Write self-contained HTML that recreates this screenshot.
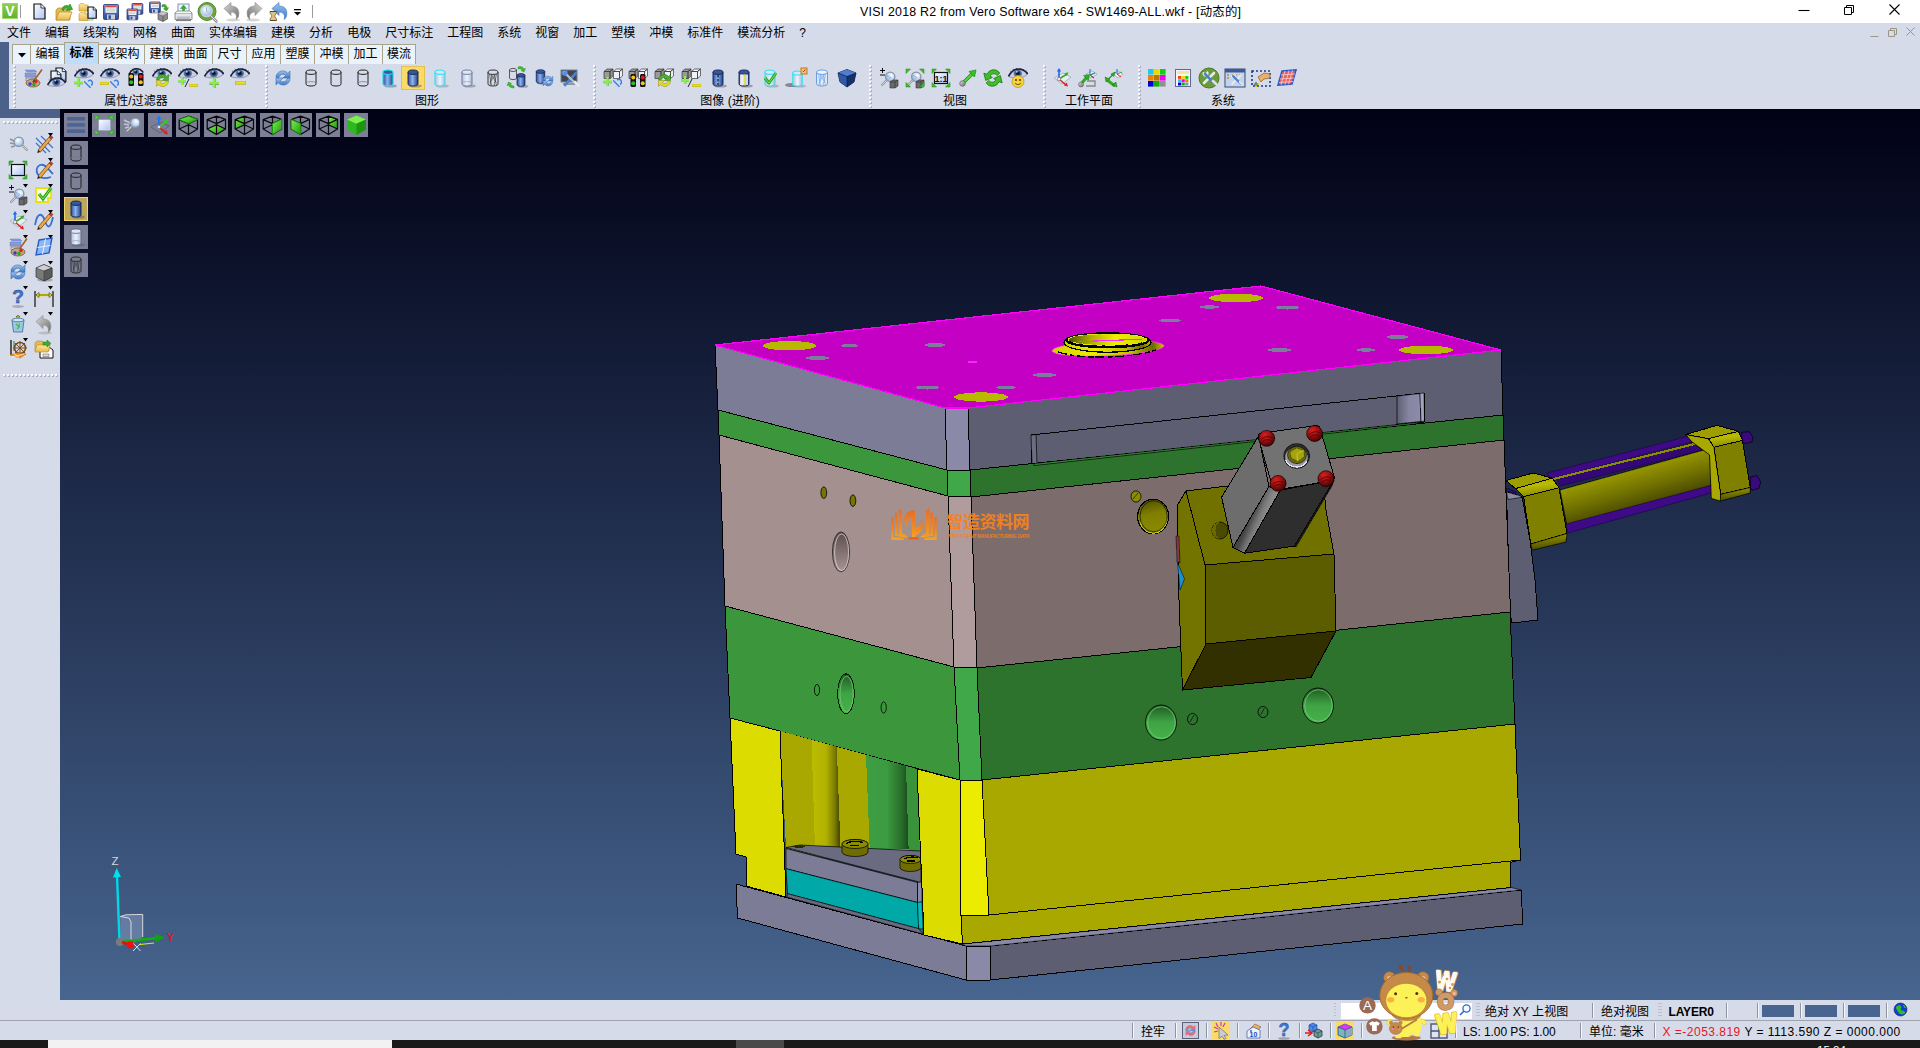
<!DOCTYPE html>
<html lang="zh-CN">
<head>
<meta charset="utf-8">
<title>VISI 2018 R2 from Vero Software x64 - SW1469-ALL.wkf - [动态的]</title>
<style>
*{box-sizing:border-box;margin:0;padding:0}
html,body{width:1920px;height:1048px;overflow:hidden;background:#d6dbe9}
body{position:relative;font-family:"Liberation Sans","Noto Sans CJK SC",sans-serif;font-size:12px;color:#000}
.abs{position:absolute}
#title{left:0;top:0;width:1920px;height:23px;background:#fff}
#titletxt{left:860px;top:3px;width:390px;height:17px;line-height:18px;font-size:12.4px;white-space:nowrap;color:#000;letter-spacing:0.213px}
#menubar{left:0;top:23px;width:1920px;height:20px;background:#d6dbe9;display:flex;padding-left:0}
#menubar span{display:block;padding:0 7px;line-height:20px;height:20px;font-size:12px;white-space:nowrap}
#bluestrip1{left:0;top:42px;width:9px;height:76px;background:#4c6189}
#bluestrip2{left:0;top:109px;width:60px;height:9px;background:#4c6189}
#tabs{left:12px;top:44px;height:20px;display:flex}
.tab{height:20px;border:1px solid #a9a58c;border-bottom:none;border-right:none;background:#eaf2fb;font-size:12px;line-height:19px;text-align:center;white-space:nowrap}
.tab.last{border-right:1px solid #a9a58c}
.tab.act{background:#c1dcf8;height:22px;margin-top:-2px;line-height:21px;border-right:1px solid #a9a58c;font-weight:700;width:35px !important;margin-right:-1px;position:relative;z-index:2}
#toolbar{left:9px;top:64px;width:1911px;height:45px;background:#d6dbe9}
.grip{position:absolute;width:3px;background-image:repeating-linear-gradient(to bottom,#f7f9fd 0,#f7f9fd 2px,rgba(0,0,0,0) 2px,rgba(0,0,0,0) 4px),repeating-linear-gradient(to bottom,#a9afc0 0,#a9afc0 2px,rgba(0,0,0,0) 2px,rgba(0,0,0,0) 4px);background-size:2px 100%,2px 100%;background-position:0 0,1px 1px;background-repeat:no-repeat}
.gl{position:absolute;top:94px;height:14px;line-height:14px;font-size:12px;white-space:nowrap;transform:translateX(-50%)}
.ic{position:absolute;overflow:visible}
#viewport{left:60px;top:109px;width:1860px;height:891px;background:linear-gradient(to bottom,#010114 0%,#0d132c 18%,#263657 55%,#47658f 100%);overflow:hidden}
.vb{position:absolute;width:24px;height:24px;background:#7d7f96}
.vb.on{background:#bda75c;border:1px solid #f3d46b}
#leftpanel{left:0;top:118px;width:60px;height:882px;background:#d6dbe9}
.hgrip{position:absolute;height:3px;background-image:repeating-linear-gradient(to right,#f7f9fd 0,#f7f9fd 2px,rgba(0,0,0,0) 2px,rgba(0,0,0,0) 4px),repeating-linear-gradient(to right,#a9afc0 0,#a9afc0 2px,rgba(0,0,0,0) 2px,rgba(0,0,0,0) 4px);background-size:100% 2px,100% 2px;background-position:0 0,1px 1px;background-repeat:no-repeat}
#status1{left:0;top:1000px;width:1920px;height:20px;background:#d6dbe9}
#status2{left:0;top:1020px;width:1920px;height:20px;background:#d6dbe9;border-top:1px solid #9fa3ad}
.st{position:absolute;white-space:nowrap;font-size:12px;line-height:16px;height:16px}
.sep{position:absolute;width:1px;height:15px;background:#8f949f;box-shadow:1px 0 0 #f6f8fc}
#taskbar{left:0;top:1040px;width:1920px;height:8px;background:#1a1a1a}
</style>
</head>
<body>
<svg width="0" height="0" style="position:absolute">
<defs>
<linearGradient id="gBlueCyl" x1="0" x2="1" y1="0" y2="0"><stop offset="0" stop-color="#2b4f9e"/><stop offset=".45" stop-color="#8db4ee"/><stop offset="1" stop-color="#1f3f86"/></linearGradient>
<linearGradient id="gGlass" x1="0" x2="1" y1="0" y2="0"><stop offset="0" stop-color="#aebfe0"/><stop offset=".5" stop-color="#eef3fc"/><stop offset="1" stop-color="#a9b9dc"/></linearGradient>
<linearGradient id="gDoc" x1="0" x2="1" y1="0" y2="1"><stop offset="0" stop-color="#ffffff"/><stop offset="1" stop-color="#a9c4f2"/></linearGradient>
<linearGradient id="gFolder" x1="0" x2="0" y1="0" y2="1"><stop offset="0" stop-color="#fbe9a0"/><stop offset="1" stop-color="#e9b84a"/></linearGradient>
<linearGradient id="gFloppy" x1="0" x2="0" y1="0" y2="1"><stop offset="0" stop-color="#6d8fd0"/><stop offset="1" stop-color="#2c4a94"/></linearGradient>
<linearGradient id="gGreenFace" x1="0" x2="1" y1="0" y2="1"><stop offset="0" stop-color="#7ff04a"/><stop offset="1" stop-color="#1e9a12"/></linearGradient>
<linearGradient id="gGray" x1="0" x2="1" y1="0" y2="1"><stop offset="0" stop-color="#d8d8d8"/><stop offset="1" stop-color="#6e6e6e"/></linearGradient>
<radialGradient id="gLens" cx=".4" cy=".35" r=".7"><stop offset="0" stop-color="#ffffff"/><stop offset="1" stop-color="#8fb5e6"/></radialGradient>
<radialGradient id="gIris" cx=".5" cy=".5" r=".5"><stop offset="0" stop-color="#14203a"/><stop offset=".55" stop-color="#3c5684"/><stop offset="1" stop-color="#6f8fc0"/></radialGradient>
<linearGradient id="gBlueArrow" x1="0" x2="0" y1="0" y2="1"><stop offset="0" stop-color="#9cc3ee"/><stop offset="1" stop-color="#3f78c4"/></linearGradient>

<symbol id="cylW" viewBox="0 0 20 20"><path d="M5 4.2v11.6a5 2.2 0 0 0 10 0V4.2" fill="none" stroke="#222" stroke-width="1"/><ellipse cx="10" cy="4.2" rx="5" ry="2.2" fill="none" stroke="#222" stroke-width="1"/><path d="M5 15.8a5 2.2 0 0 1 10 0" fill="none" stroke="#777" stroke-width=".7"/></symbol>
<symbol id="cylW2" viewBox="0 0 20 20"><path d="M5 4.2v11.6a5 2.2 0 0 0 10 0V4.2" fill="none" stroke="#222" stroke-width="1"/><ellipse cx="10" cy="4.2" rx="5" ry="2.2" fill="none" stroke="#222" stroke-width="1"/></symbol>
<symbol id="cylB" viewBox="0 0 20 20"><ellipse cx="12.5" cy="18" rx="6.5" ry="1.6" fill="#556" opacity=".45"/><path d="M5 4.2v11.6a5 2.2 0 0 0 10 0V4.2z" fill="url(#gBlueCyl)" stroke="#14224a" stroke-width=".9"/><ellipse cx="10" cy="4.2" rx="5" ry="2.2" fill="#35579f" stroke="#14224a" stroke-width=".9"/></symbol>
<symbol id="cylBC" viewBox="0 0 20 20"><ellipse cx="12.5" cy="18" rx="6.5" ry="1.6" fill="#556" opacity=".45"/><path d="M5 4.2v11.6a5 2.2 0 0 0 10 0V4.2z" fill="url(#gBlueCyl)" stroke="#19e0f0" stroke-width="1.1"/><ellipse cx="10" cy="4.2" rx="5" ry="2.2" fill="#35579f" stroke="#19e0f0" stroke-width="1.1"/></symbol>
<symbol id="cylG" viewBox="0 0 20 20"><ellipse cx="12.5" cy="18" rx="6.5" ry="1.6" fill="#556" opacity=".4"/><path d="M5 4.2v11.6a5 2.2 0 0 0 10 0V4.2z" fill="url(#gGlass)" stroke="#5a6684" stroke-width=".8"/><ellipse cx="10" cy="4.2" rx="5" ry="2.2" fill="#dde6f6" stroke="#5a6684" stroke-width=".8"/><path d="M5 15.8a5 2.2 0 0 1 10 0" fill="none" stroke="#8892ad" stroke-width=".6"/></symbol>
<symbol id="cylGC" viewBox="0 0 20 20"><ellipse cx="12.5" cy="18" rx="6.5" ry="1.6" fill="#556" opacity=".3"/><path d="M5 4.2v11.6a5 2.2 0 0 0 10 0V4.2z" fill="url(#gGlass)" stroke="#2fe3f0" stroke-width="1.1"/><ellipse cx="10" cy="4.2" rx="5" ry="2.2" fill="#dde6f6" stroke="#2fe3f0" stroke-width="1.1"/></symbol>
<symbol id="cylM" viewBox="0 0 20 20"><path d="M5 4.2v11.6a5 2.2 0 0 0 10 0V4.2" fill="none" stroke="#222" stroke-width=".9"/><ellipse cx="10" cy="4.2" rx="5" ry="2.2" fill="none" stroke="#222" stroke-width=".9"/><path d="M6.5 6l2 11.5M9 6.4l-2 11M11 6.4l2.5 11M13.5 6l-2.5 11.6M8 6.3l5 8M12.4 6.3l-5.4 8" fill="none" stroke="#333" stroke-width=".6"/></symbol>
<symbol id="eye" viewBox="0 0 20 12"><path d="M.6 8.600C3.500 3.400 7.500 1.400 10.500 1.500c3.800.1 7 2.300 9 4.800-2.600 2.200-5.400 3.400-9 3.600C6.500 10 3 9.600.6 8.600z" fill="#c6cfec" stroke="#6a5a6e" stroke-width=".5"/><ellipse cx="9.800" cy="5.400" rx="4.300" ry="4.100" fill="url(#gIris)"/><circle cx="9.800" cy="5.300" r="1.700" fill="#0c1424"/><circle cx="8.800" cy="3.800" r="1" fill="#a8c6ff"/><path d="M.6 8.300C3.500 2.800 7.500 1 10.500 1c3.800 0 7.200 2.200 9.100 5" fill="none" stroke="#1c2234" stroke-width="1.700"/><path d="M3.500 4.200l-1.200-1.600M5.800 2.600l-.8-1.800M8.800 1.500L8.500 0M12 1.400l.5-1.400M15 2.400l1-1.400M17.300 3.800l1.300-1M18.800 5.400l1.200-.6" stroke="#1c2234" stroke-width=".7"/></symbol>
<symbol id="refB" viewBox="0 0 20 20"><path d="M3 9.500C3 5 7 2.500 10.500 3c2 .3 3.300 1.200 4.300 2.300L17 3v7h-7l2.600-2.600C11.800 6.600 11 6.200 10 6.200 7.600 6.200 6 8 6 9.500z" fill="url(#gBlueArrow)" stroke="#3a6eb6" stroke-width=".6"/><path d="M17 10.500c0 4.500-4 7-7.500 6.500-2-.3-3.300-1.200-4.300-2.300L3 17v-7h7l-2.600 2.600c.8.800 1.600 1.200 2.600 1.200 2.400 0 4-1.800 4-3.300z" fill="url(#gBlueArrow)" stroke="#3a6eb6" stroke-width=".6"/></symbol>
<symbol id="refG" viewBox="0 0 20 20"><path d="M3 9.500C3 5 7 2.500 10.500 3c2 .3 3.300 1.200 4.300 2.300L17 3v7h-7l2.600-2.600C11.800 6.600 11 6.200 10 6.200 7.600 6.200 6 8 6 9.500z" fill="#49b32c" stroke="#1f7a10" stroke-width=".6"/><path d="M17 10.500c0 4.500-4 7-7.500 6.500-2-.3-3.300-1.200-4.300-2.300L3 17v-7h7l-2.600 2.600c.8.800 1.600 1.200 2.600 1.200 2.400 0 4-1.800 4-3.300z" fill="#e6dc20" stroke="#8f8a10" stroke-width=".6"/></symbol>
<symbol id="plusG" viewBox="0 0 8 8"><path d="M3.400 .6h2v3h3v2h-3v3h-2v-3h-3v-2h3z" fill="#3a4a2a" opacity=".55"/><path d="M3 0h2v3h3v2H5v3H3V5H0V3h3z" fill="#86f048"/></symbol>
<symbol id="minusY" viewBox="0 0 8 3"><rect x="0" y="0" width="8" height="2.400" fill="#ecdf10" stroke="#a89e08" stroke-width=".4"/></symbol>
<symbol id="undoS" viewBox="0 0 8 8"><path d="M.5 2.500l5 5M4 1.600c2.400-1.600 4.600 1.600 2.800 3.800" fill="none" stroke="#3a80e8" stroke-width="1.300" stroke-linecap="round"/></symbol>
<symbol id="traffic" viewBox="0 0 20 20"><rect x="2.500" y="5" width="5.500" height="13" rx="1.500" fill="#111"/><rect x="12" y="5" width="5.500" height="13" rx="1.500" fill="#111"/><circle cx="5.250" cy="8.500" r="2" fill="#f2c511"/><circle cx="5.250" cy="14.300" r="2" fill="#22c322"/><circle cx="14.750" cy="8.500" r="2" fill="#e81818"/><circle cx="14.750" cy="14.300" r="2" fill="#f2c511"/></symbol>
<symbol id="cubes" viewBox="0 0 20 12"><path d="M1 3.500l3-2.500h6l-3 2.500zM1 3.500h6v7H1zM7 3.500l3-2.500v7l-3 2.500z" fill="#9a9a9a" stroke="#3a3a3a" stroke-width=".7"/><path d="M10.500 3.500l3-2.500h6l-3 2.500zM10.500 3.500h6v7h-6zM16.500 3.500l3-2.500v7l-3 2.500z" fill="#eef1f6" stroke="#3a3a3a" stroke-width=".7"/></symbol>
<symbol id="vcube" viewBox="0 0 24 24"><path d="M12 3.500L20.500 7v10L12 21.500 3.500 17V7zM3.500 7L12 11l8.500-4M12 11v10.500M12 3.500v10M3.500 17l8.500-3.500 8.500 3.500" fill="none" stroke="#0c0c0c" stroke-width="1.200" stroke-linejoin="round"/></symbol>
<symbol id="mag" viewBox="0 0 20 20"><path d="M11.500 11.500l6 6" stroke="#9a9a9a" stroke-width="2.600" stroke-linecap="round"/><path d="M11.500 11.500l6 6" stroke="#dcdcdc" stroke-width="1" stroke-linecap="round"/><circle cx="8" cy="8" r="5.500" fill="url(#gLens)" stroke="#8a93a6" stroke-width="1.500"/></symbol>
<symbol id="tri" viewBox="0 0 6 4"><path d="M0 0h6L3 4z" fill="#000"/></symbol>
</defs>
</svg>
<div id="title" class="abs"></div>
<div id="titletxt" class="abs">VISI 2018 R2 from Vero Software x64 - SW1469-ALL.wkf - [动态的]</div>
<div class="abs" style="left:2px;top:3px;width:16px;height:16px;background:linear-gradient(#8ad04e,#5fb32e);border:1px solid #9fd86a;color:#fff;font-weight:bold;font-size:14px;line-height:14px;text-align:center">V</div>
<div class="abs" style="left:20px;top:5px;width:1px;height:13px;background:#9a9a9a"></div>
<svg class="ic" style="left:31px;top:3px" width="18" height="18" viewBox="0 0 18 18"><path d="M3 1h7.0l4.0 4.0v11.0h-11.0z" fill="url(#gDoc)" stroke="#111" stroke-width="1.2"/><path d="M10.0 1v4.0h4.0" fill="#fff" stroke="#111" stroke-width=".8"/></svg>
<svg class="ic" style="left:54px;top:2px" width="20" height="20" viewBox="0 0 20 20"><path d="M2 8l2-2h5l1.500 1.500H16V18H2z" fill="#e8b94d" stroke="#b8862a" stroke-width=".7"/><path d="M2 18l3-8h13l-3 8z" fill="url(#gFolder)" stroke="#b8862a" stroke-width=".7"/><path d="M8 8C8 4 12 2.500 15 4l1-2 2.500 5.500-6 1 1.200-2C11.500 5.600 9.500 6.500 9.800 8.500z" fill="#3fae2a" stroke="#1c7a10" stroke-width=".6"/></svg>
<svg class="ic" style="left:77px;top:2px" width="21" height="20" viewBox="0 0 21 20"><rect x="8" y="6" width="8" height="12" fill="#eafbe4" stroke="#6ac85a" stroke-width=".8"/><path d="M2 3l1.500-1.500h3L8 3h3v6H2z" fill="url(#gFolder)" stroke="#c8962e" stroke-width=".6"/><path d="M2 12l1.500-1.500h3L8 12h3v6.500H2z" fill="url(#gFolder)" stroke="#c8962e" stroke-width=".6"/><path d="M11 5h5.25l3.0 3.0v8.25h-8.25z" fill="url(#gDoc)" stroke="#111" stroke-width="1.2"/><path d="M16.25 5v3.0h3.0" fill="#fff" stroke="#111" stroke-width=".8"/></svg>
<svg class="ic" style="left:102px;top:3px" width="18" height="18" viewBox="0 0 18 18"><rect x="1.5" y="1.5" width="15.0" height="15.0" rx="1" fill="url(#gFloppy)" stroke="#22346e" stroke-width=".8"/><rect x="3.5" y="2.3" width="11.0" height="7.5" fill="#f4f4f4"/><rect x="3.5" y="2.3" width="11.0" height="2.0" fill="#e0443a"/><path d="M4.5 6.0h9.0M4.5 7.8h9.0" stroke="#9aa" stroke-width="0.6"/><rect x="5.0" y="11.5" width="8.0" height="5.0" fill="#c9ced8"/><rect x="6.5" y="12.3" width="2.4" height="3.6" fill="#2c4a94"/></svg>
<svg class="ic" style="left:126px;top:3px" width="19" height="18" viewBox="0 0 19 18"><rect x="6" y="0.5" width="10.799999999999999" height="10.799999999999999" rx="1" fill="url(#gFloppy)" stroke="#22346e" stroke-width=".8"/><rect x="7.4399999999999995" y="1.076" width="7.92" height="5.3999999999999995" fill="#f4f4f4"/><rect x="7.4399999999999995" y="1.076" width="7.92" height="1.44" fill="#e0443a"/><path d="M8.16 3.7399999999999998h6.4799999999999995M8.16 5.036h6.4799999999999995" stroke="#9aa" stroke-width="0.432"/><rect x="8.52" y="7.699999999999999" width="5.76" height="3.5999999999999996" fill="#c9ced8"/><rect x="9.6" y="8.276" width="1.728" height="2.592" fill="#2c4a94"/><rect x="1" y="6" width="10.799999999999999" height="10.799999999999999" rx="1" fill="url(#gFloppy)" stroke="#22346e" stroke-width=".8"/><rect x="2.44" y="6.576" width="7.92" height="5.3999999999999995" fill="#f4f4f4"/><rect x="2.44" y="6.576" width="7.92" height="1.44" fill="#e0443a"/><path d="M3.16 9.24h6.4799999999999995M3.16 10.536h6.4799999999999995" stroke="#9aa" stroke-width="0.432"/><rect x="3.52" y="13.2" width="5.76" height="3.5999999999999996" fill="#c9ced8"/><rect x="4.6" y="13.776" width="1.728" height="2.592" fill="#2c4a94"/></svg>
<svg class="ic" style="left:149px;top:1px" width="21" height="21" viewBox="0 0 21 21"><rect x="0.5" y="1" width="10.799999999999999" height="10.799999999999999" rx="1" fill="url(#gFloppy)" stroke="#22346e" stroke-width=".8"/><rect x="1.94" y="1.576" width="7.92" height="5.3999999999999995" fill="#f4f4f4"/><rect x="1.94" y="1.576" width="7.92" height="1.44" fill="#e0443a"/><path d="M2.66 4.24h6.4799999999999995M2.66 5.536h6.4799999999999995" stroke="#9aa" stroke-width="0.432"/><rect x="3.02" y="8.2" width="5.76" height="3.5999999999999996" fill="#c9ced8"/><rect x="4.1" y="8.776" width="1.728" height="2.592" fill="#2c4a94"/><path d="M13 4c2.500-1.500 5 0 5 3l1.500-.3-2 3.300-3-2.200 1.600-.3C16 6 14.500 5 13 6z" fill="#3fae2a" stroke="#1c7a10" stroke-width=".5"/><path d="M9 13l4-2.500 5.500 1.500v6L14 20.500 9 18.500z" fill="#8c8c8c" stroke="#444" stroke-width=".6"/><path d="M9 13l5 1.800 4.500-2.800M14 14.800v5.700" fill="none" stroke="#444" stroke-width=".6"/><path d="M9 13l4-2.500 5.500 1.500-4.500 2.800z" fill="#c4c4c4"/></svg>
<svg class="ic" style="left:173px;top:2px" width="21" height="20" viewBox="0 0 21 20"><rect x="5" y="2" width="11" height="9" fill="#eef4ff" stroke="#5a6a8a" stroke-width=".7"/><path d="M10.500 3l3 3.500h-2v3h-2v-3h-2z" fill="#2fb62a" stroke="#15780f" stroke-width=".4"/><path d="M2 11h17v6.500H2z" fill="#e4e6ea" stroke="#6e7480" stroke-width=".8"/><path d="M2 11l2-2h13l2 2" fill="#f3f4f6" stroke="#6e7480" stroke-width=".7"/><rect x="4" y="14.500" width="13" height="2.500" fill="#b9bcc4"/><path d="M3 18.500h15" stroke="#7b7f88" stroke-width="1.200"/></svg>
<svg class="ic" style="left:197px;top:1px" width="22" height="22" viewBox="0 0 22 22"><circle cx="10" cy="10.500" r="9" fill="#6aa83c"/><circle cx="10" cy="10.500" r="9" fill="none" stroke="#4f8c28" stroke-width="1"/><path d="M13 14l6.500 6.500" stroke="#8d8d8d" stroke-width="2.600" stroke-linecap="round"/><path d="M13 14l6.500 6.500" stroke="#e4e4e4" stroke-width="1" stroke-linecap="round"/><circle cx="9.500" cy="10" r="5.600" fill="url(#gLens)" stroke="#c9ced8" stroke-width="1.500"/><path d="M9.500 6.500v3.500l1.500 1.500" fill="none" stroke="#7fa0cc" stroke-width=".8"/></svg>
<svg class="ic" style="left:222px;top:1px" width="20" height="22" viewBox="0 0 20 22"><ellipse cx="11" cy="19" rx="7" ry="1.500" fill="#888" opacity=".35"/><path d="M2 7.500L9 1.500v3.500c6 0 9 4 7.500 10-.3 1.300-1.200 2.600-2.500 3.500 1.500-4-.5-7.500-5-7.500v3.500z" fill="url(#gGray)" stroke="#8a8a8a" stroke-width=".6"/></svg>
<svg class="ic" style="left:244px;top:1px" width="20" height="22" viewBox="0 0 20 22"><g transform="translate(20,0) scale(-1,1)"><ellipse cx="11" cy="19" rx="7" ry="1.500" fill="#888" opacity=".35"/><path d="M2 7.500L9 1.500v3.500c6 0 9 4 7.500 10-.3 1.300-1.200 2.600-2.500 3.500 1.500-4-.5-7.500-5-7.500v3.500z" fill="url(#gGray)" stroke="#8a8a8a" stroke-width=".6"/></g></svg>
<svg class="ic" style="left:267px;top:1px" width="22" height="22" viewBox="0 0 22 22"><path d="M5 7.500L12 1.500v3.500c6 0 9 4 7.500 10-.3 1.300-1.200 2.600-2.500 3.500 1.500-4-.5-7.500-5-7.500v3.500z" fill="url(#gBlueArrow)" stroke="#3f78c4" stroke-width=".6"/><path d="M3 10.500h6.500v1.500L7.500 15l2 3v1.500H3V18l2-3-2-3z" fill="#d9c38a" stroke="#6a5420" stroke-width=".7"/><path d="M3 10.500h6.500M3 19.500h6.500" stroke="#5a4418" stroke-width="1.200"/></svg>
<svg class="ic" style="left:294px;top:9px" width="8" height="8" viewBox="0 0 8 8"><rect x="0" y="0" width="7" height="1.300" fill="#000"/><path d="M0 3h7L3.500 6.500z" fill="#000"/></svg>
<div class="abs" style="left:312px;top:5px;width:1px;height:13px;background:#9a9a9a"></div>
<svg class="ic" style="left:1797px;top:2px" width="112" height="16" viewBox="0 0 112 16"><path d="M1.500 8.500h11" stroke="#000" stroke-width="1.100"/><path d="M47.500 5.500h7v7h-7zM49.500 5.500v-2h7v7h-2" fill="none" stroke="#000" stroke-width="1"/><path d="M92.500 2.500l10 10M102.500 2.500l-10 10" stroke="#000" stroke-width="1.100"/></svg>
<div id="menubar" class="abs"><span>文件</span><span>编辑</span><span>线架构</span><span>网格</span><span>曲面</span><span>实体编辑</span><span>建模</span><span>分析</span><span>电极</span><span>尺寸标注</span><span>工程图</span><span>系统</span><span>视窗</span><span>加工</span><span>塑模</span><span>冲模</span><span>标准件</span><span>模流分析</span><span>?</span></div>
<svg class="ic" style="left:1866px;top:26px" width="54" height="14" viewBox="0 0 54 14"><path d="M4.500 10.500h8" stroke="#9a9686" stroke-width="1"/><path d="M22.500 4.500h6v6h-6zM24.500 4.500v-2h6v6h-2" fill="none" stroke="#9a9686" stroke-width="1"/><path d="M40.500 1.500l8 8M48.500 1.500l-8 8" stroke="#9a9686" stroke-width="1"/></svg>
<div id="bluestrip1" class="abs"></div><div id="bluestrip2" class="abs"></div>
<div id="toolbar" class="abs"></div>
<div id="tabs" class="abs"><div class="tab" style="width:18px;position:relative"><svg style="position:absolute;left:5px;top:8px" width="8" height="5"><path d="M0 0h8L4 4.500z" fill="#000"/></svg></div><div class="tab " style="width:34px">编辑</div><div class="tab act" style="width:34px">标准</div><div class="tab " style="width:46px">线架构</div><div class="tab " style="width:34px">建模</div><div class="tab " style="width:34px">曲面</div><div class="tab " style="width:34px">尺寸</div><div class="tab " style="width:34px">应用</div><div class="tab " style="width:34px">塑膜</div><div class="tab " style="width:34px">冲模</div><div class="tab " style="width:34px">加工</div><div class="tab last" style="width:34px">模流</div></div>
<div class="grip" style="left:13px;top:65px;height:43px"></div>
<div class="grip" style="left:265px;top:65px;height:43px"></div>
<div class="grip" style="left:593px;top:65px;height:43px"></div>
<div class="grip" style="left:869px;top:65px;height:43px"></div>
<div class="grip" style="left:1043px;top:65px;height:43px"></div>
<div class="grip" style="left:1138px;top:65px;height:43px"></div>
<div class="gl" style="left:136px">属性/过滤器</div>
<div class="gl" style="left:427px">图形</div>
<div class="gl" style="left:730px">图像 (进阶)</div>
<div class="gl" style="left:955px">视图</div>
<div class="gl" style="left:1089px">工作平面</div>
<div class="gl" style="left:1223px">系统</div>
<svg class="ic" style="left:23px;top:68px" width="21" height="20" viewBox="0 0 21 20"><path d="M2 2h10l2 2H4zM2 5h11v1.600H2zM2 7.500h11v1.600H2z" fill="#8aa0e8" stroke="#5060a8" stroke-width=".4"/><path d="M3 10h9l1 2-1 1H3z" fill="#d8d8d8" stroke="#555" stroke-width=".5"/><ellipse cx="10" cy="15" rx="7" ry="4" fill="#c9a07a" stroke="#6a4a30" stroke-width=".7"/><circle cx="7" cy="16" r="1.700" fill="#2040e0"/><circle cx="11" cy="16.500" r="1.700" fill="#18b018"/><circle cx="13" cy="13.500" r="1.700" fill="#e02020"/><path d="M19 1.500L11.500 12" stroke="#a06020" stroke-width="1.600"/><path d="M11.500 12l-1.500 2.500" stroke="#444" stroke-width="1.600"/></svg>
<svg class="ic" style="left:47px;top:67px" width="22" height="22" viewBox="0 0 22 22"><path d="M9 1h6.3l3.6 3.6v9.9h-9.9z" fill="url(#gDoc)" stroke="#111" stroke-width="1.2"/><path d="M15.3 1v3.6h3.6" fill="#fff" stroke="#111" stroke-width=".8"/><path d="M4 4h6.3l3.6 3.6v9.9h-9.9z" fill="url(#gDoc)" stroke="#111" stroke-width="1.2"/><path d="M10.3 4v3.6h3.6" fill="#fff" stroke="#111" stroke-width=".8"/><use href="#eye" x="0" y="10" width="19" height="11.400"/></svg>
<svg class="ic" style="left:73px;top:68px" width="22" height="20" viewBox="0 0 22 20"><use href="#eye" x="1" y="0" width="20" height="12"/><use href="#plusG" x="1" y="10" width="9" height="9"/><use href="#undoS" x="11" y="11" width="9" height="9"/></svg>
<svg class="ic" style="left:99px;top:68px" width="22" height="20" viewBox="0 0 22 20"><use href="#eye" x="1" y="0" width="20" height="12"/><use href="#minusY" x="1" y="14" width="9" height="3.400"/><use href="#undoS" x="11" y="11" width="9" height="9"/></svg>
<svg class="ic" style="left:126px;top:68px" width="20" height="20" viewBox="0 0 20 20"><use href="#eye" x="2" y="0" width="16" height="9"/><use href="#traffic" x="0" y="0" width="20" height="20"/></svg>
<svg class="ic" style="left:151px;top:68px" width="22" height="20" viewBox="0 0 22 20"><use href="#eye" x="1" y="0" width="20" height="12"/><use href="#refG" x="3" y="4" width="17" height="17"/></svg>
<svg class="ic" style="left:177px;top:68px" width="22" height="20" viewBox="0 0 22 20"><use href="#eye" x="1" y="0" width="20" height="12"/><use href="#plusG" x="1" y="9" width="8" height="8"/><path d="M8 19l4-8" stroke="#222" stroke-width="1"/><use href="#minusY" x="12" y="16" width="9" height="3.400"/></svg>
<svg class="ic" style="left:203px;top:68px" width="22" height="20" viewBox="0 0 22 20"><use href="#eye" x="1" y="0" width="20" height="12"/><use href="#plusG" x="6" y="10" width="10" height="10"/></svg>
<svg class="ic" style="left:229px;top:68px" width="22" height="20" viewBox="0 0 22 20"><use href="#eye" x="1" y="0" width="20" height="12"/><use href="#minusY" x="6" y="13" width="11" height="4"/></svg>
<svg class="ic" style="left:273px;top:68px" width="20" height="20" ><use href="#refB" width="20" height="20"/></svg>
<svg class="ic" style="left:300.5px;top:68px" width="20" height="20" ><use href="#cylW" width="20" height="20"/></svg>
<svg class="ic" style="left:326px;top:68px" width="20" height="20" ><use href="#cylW2" width="20" height="20"/></svg>
<svg class="ic" style="left:352.5px;top:68px" width="20" height="20" ><use href="#cylW" width="20" height="20"/></svg>
<svg class="ic" style="left:378px;top:68px" width="20" height="20" ><use href="#cylBC" width="20" height="20"/></svg>
<div class="abs" style="left:401px;top:66px;width:24px;height:24px;background:#fbdb68;border:1px solid #e6c04e"></div>
<svg class="ic" style="left:403px;top:68px" width="20" height="20" ><use href="#cylB" width="20" height="20"/></svg>
<svg class="ic" style="left:430px;top:68px" width="20" height="20" ><use href="#cylGC" width="20" height="20"/></svg>
<svg class="ic" style="left:456.5px;top:68px" width="20" height="20" ><use href="#cylG" width="20" height="20"/></svg>
<svg class="ic" style="left:482.5px;top:68px" width="20" height="20" ><use href="#cylM" width="20" height="20"/></svg>
<svg class="ic" style="left:506px;top:66px" width="22" height="24" viewBox="0 0 22 24"><use href="#cylW2" x="0" y="1" width="14" height="14"/><use href="#cylB" x="7" y="6" width="16" height="16"/><path d="M12 1c3-1 5 0 6 2l1.500-.5-1.500 3.500-3-1.500 1.300-.5c-1-1.200-2.500-1.500-4.300-1z" fill="#3fbe2a" stroke="#1c8a10" stroke-width=".4"/><path d="M8 22c-3 0-5-1-5.500-3l-1.500.5 1.500-3.500 3 1.500-1.300.5c.800 1.200 2 1.800 3.800 2z" fill="#3fbe2a" stroke="#1c8a10" stroke-width=".4"/></svg>
<svg class="ic" style="left:532px;top:68px" width="23" height="20" viewBox="0 0 23 20"><use href="#cylB" x="0" y="0" width="17" height="17"/><use href="#refB" x="9" y="6" width="14" height="14"/></svg>
<svg class="ic" style="left:560px;top:68px" width="21" height="20" viewBox="0 0 21 20"><rect x="1" y="2" width="16" height="12" fill="#40454e" stroke="#7a8090" stroke-width="1"/><rect x="3" y="15" width="12" height="2" fill="#9096a4"/><path d="M5 17L16 5" stroke="#4a80d0" stroke-width="2.600" stroke-linecap="round"/><path d="M4 4l12 12" stroke="#b8bcc6" stroke-width="2.400" stroke-linecap="round"/><path d="M2 3a3 3 0 1 0 4-1L5 4z" fill="#5a90e0"/><path d="M15 14l3.500 3.500" stroke="#e8e8e8" stroke-width="2.600" stroke-linecap="round"/></svg>
<svg class="ic" style="left:602px;top:67px" width="22" height="22" viewBox="0 0 22 22"><use href="#cubes" x="1" y="1" width="20" height="12"/><use href="#plusG" x="1" y="10" width="9" height="9"/><use href="#undoS" x="11" y="11" width="9" height="9"/></svg>
<svg class="ic" style="left:628px;top:67px" width="20" height="22" viewBox="0 0 20 22"><use href="#cubes" x="0" y="1" width="20" height="12"/><use href="#traffic" x="0" y="2" width="20" height="20"/></svg>
<svg class="ic" style="left:653px;top:67px" width="22" height="22" viewBox="0 0 22 22"><use href="#cubes" x="1" y="1" width="20" height="12"/><use href="#refG" x="3" y="5" width="17" height="17"/></svg>
<svg class="ic" style="left:679.5px;top:67px" width="22" height="22" viewBox="0 0 22 22"><use href="#cubes" x="1" y="1" width="20" height="12"/><use href="#plusG" x="1" y="9" width="8" height="8"/><path d="M8 20l4-8" stroke="#222" stroke-width="1"/><use href="#minusY" x="12" y="17" width="9" height="3.400"/></svg>
<svg class="ic" style="left:707.5px;top:68px" width="20" height="20" viewBox="0 0 20 20"><use href="#cylB" width="20" height="20"/><path d="M10 7v10" stroke="#111" stroke-width="1.200" stroke-dasharray="2.500 1.500"/></svg>
<svg class="ic" style="left:733.5px;top:68px" width="20" height="20" viewBox="0 0 20 20"><use href="#cylB" width="20" height="20"/><rect x="6" y="6.500" width="8" height="10.500" fill="#e8ecf4" opacity=".85"/><path d="M11 6.500v11" stroke="#e8d820" stroke-width="1.400"/><path d="M8 6.500v11" stroke="#fff" stroke-width="1"/></svg>
<svg class="ic" style="left:759.5px;top:68px" width="20" height="20" viewBox="0 0 20 20"><use href="#cylGC" width="20" height="20"/><path d="M5 10l4 5 7-10" fill="none" stroke="#27a81e" stroke-width="3" stroke-linejoin="round"/><path d="M5 10l4 5 7-10" fill="none" stroke="#7ae060" stroke-width="1" stroke-linejoin="round"/></svg>
<svg class="ic" style="left:784px;top:67px" width="24" height="22" viewBox="0 0 24 22"><ellipse cx="8" cy="18" rx="7" ry="2" fill="#444" opacity=".55"/><use href="#cylGC" x="4" y="2" width="19" height="19"/><rect x="17" y="1" width="6" height="6" fill="#f0c080" stroke="#c87818" stroke-width="1"/><path d="M19 5l2.500-2.500" stroke="#c83018" stroke-width="1"/></svg>
<svg class="ic" style="left:811.5px;top:68px" width="20" height="20" viewBox="0 0 20 20"><path d="M4.500 4.200v11.600a5.500 2.200 0 0 0 11 0V4.200" fill="#dfe8f8" stroke="#5a96e0" stroke-width=".9"/><ellipse cx="10" cy="4.200" rx="5.500" ry="2.200" fill="#eef3fc" stroke="#5a96e0" stroke-width=".9"/><path d="M6.500 6l2 11.500M9 6.400l-2 11M11 6.400l2.500 11M13.500 6l-2.500 11.600M8 6.300l5 8M12.400 6.300l-5.400 8" fill="none" stroke="#6aa0e4" stroke-width=".6"/></svg>
<svg class="ic" style="left:837px;top:68px" width="20" height="20" viewBox="0 0 20 20"><path d="M1 5l9-3.500L19 5 17 14l-7 5-7-5z" fill="#1c3a7c" stroke="#0a1838" stroke-width=".8"/><path d="M1 5l9 3.500L19 5 10 1.500z" fill="#4f7ed0"/><path d="M10 8.500V19l7-5 2-9z" fill="#16306a"/><path d="M1 5l9 3.500V19l-7-5z" fill="#2e58a8"/><path d="M1 5l9 3.500L19 5M10 8.500V19" fill="none" stroke="#0a1838" stroke-width=".6"/></svg>
<svg class="ic" style="left:878.5px;top:67px" width="20" height="22" viewBox="0 0 20 22"><g transform="translate(1,2)"><use href="#mag" x="1" y="1" width="17" height="17" transform="translate(18,0) scale(-1,1)"/><path d="M10 13l3-2h5v6l-3 2h-5z" fill="#6a6a6a" stroke="#333" stroke-width=".6"/><path d="M10 13h5v6M15 13l3-2" fill="none" stroke="#333" stroke-width=".6"/><path d="M7 6l4 2.500L7 11z" fill="#b8d0f0" stroke="#7a9ac8" stroke-width=".5"/></g><path d="M1 3.500h5M3.500 1v5M1 8h5" stroke="#111" stroke-width="1"/></svg>
<svg class="ic" style="left:904.5px;top:67px" width="20" height="22" viewBox="0 0 20 22"><g transform="translate(1,2)"><use href="#mag" x="1" y="1" width="17" height="17" transform="translate(18,0) scale(-1,1)"/><path d="M10 13l3-2h5v6l-3 2h-5z" fill="#6a6a6a" stroke="#333" stroke-width=".6"/><path d="M10 13h5v6M15 13l3-2" fill="none" stroke="#333" stroke-width=".6"/><path d="M7 6l4 2.500L7 11z" fill="#b8d0f0" stroke="#7a9ac8" stroke-width=".5"/></g><g transform="translate(0,1)"><path d="M1 1h4.500L1 5.500zM19 1v4.500L14.500 1zM1 19v-4.500L5.500 19zM19 19h-4.500L19 14.500z" fill="#3fbe2a" stroke="#1c8a10" stroke-width=".5"/></g></svg>
<svg class="ic" style="left:931px;top:68px" width="20" height="20" viewBox="0 0 20 20"><rect x="3.500" y="4.500" width="13" height="11" fill="url(#gDoc)" stroke="#111" stroke-width="1.200"/><path d="M1 1h4.500L1 5.500zM19 1v4.500L14.500 1zM1 19v-4.500L5.500 19zM19 19h-4.500L19 14.500z" fill="#3fbe2a" stroke="#1c8a10" stroke-width=".5"/><text x="10" y="13.500" font-family="Liberation Sans,sans-serif" font-size="9" font-weight="bold" text-anchor="middle" fill="#111">1:1</text></svg>
<svg class="ic" style="left:957.5px;top:68px" width="20" height="20" viewBox="0 0 20 20"><path d="M4 16L15 5" stroke="#1c8a10" stroke-width="3.400"/><path d="M4 16L15 5" stroke="#52d63a" stroke-width="1.800"/><path d="M11 3.500L18 2l-1.500 7z" fill="#3fbe2a" stroke="#1c8a10" stroke-width=".7"/><circle cx="4.500" cy="15.500" r="2.800" fill="url(#gGray)" stroke="#555" stroke-width=".6"/></svg>
<svg class="ic" style="left:982.5px;top:68px" width="20" height="20" viewBox="0 0 20 20"><g transform="translate(10,10) scale(1.22) translate(-10,-10)"><path d="M15.500 6C13 2 7 2.500 5 7l-2.500-1L4 12l5.500-2.500L7.500 8.500C9 6 12 6 13.500 8z" fill="#3fbe2a" stroke="#1c7a10" stroke-width=".7"/><path d="M4.500 14c2.500 4 8.500 3.500 10.500-1l2.500 1L16 8l-5.500 2.500 2 1C11 14 8 14 6.500 12z" fill="#3fbe2a" stroke="#1c7a10" stroke-width=".7"/></g></svg>
<svg class="ic" style="left:1007px;top:68px" width="22" height="20" viewBox="0 0 22 20"><use href="#eye" x="1" y="0" width="20" height="12"/><circle cx="11" cy="13.500" r="6" fill="#f6d23a" stroke="#b8901a" stroke-width=".7"/><circle cx="9" cy="12" r=".9" fill="#3a2a08"/><circle cx="13" cy="12" r=".9" fill="#3a2a08"/><path d="M8 15c1.500 2 4.500 2 6 0" fill="none" stroke="#3a2a08" stroke-width=".8"/></svg>
<svg class="ic" style="left:1052px;top:68px" width="20" height="20" viewBox="0 0 20 20"><path d="M2 10l9-5 8 4-9 7z" fill="#e8eef8" stroke="#8a94a8" stroke-width=".6"/><path d="M7 11V2" stroke="#1a6ae8" stroke-width="1.600"/><path d="M4.800 3.500L7 0l2.200 3.500z" fill="#1a6ae8"/><path d="M7 11l8-5" stroke="#2fae22" stroke-width="1.600"/><path d="M12.500 5.200l4-1-1.600 3.800z" fill="#2fae22"/><path d="M7 11l7 6" stroke="#e02020" stroke-width="1.600"/><path d="M12 17.500l4 1-1.200-4z" fill="#e02020"/><circle cx="7" cy="11" r="1.800" fill="#e8e8e8" stroke="#555" stroke-width=".5"/></svg>
<svg class="ic" style="left:1078px;top:68px" width="20" height="20" viewBox="0 0 20 20"><path d="M8 6l6-3 5 3-6 4z" fill="#e8eef8" stroke="#8a94a8" stroke-width=".6"/><path d="M12 7V1M12 7l5-2M12 7l4 3" stroke="#1a6ae8" stroke-width="1"/><path d="M12 7l4 3" stroke="#e02020" stroke-width="1"/><path d="M12 7l5-2" stroke="#2fae22" stroke-width="1"/><path d="M2 17l7-8" stroke="#2fae22" stroke-width="3.200"/><path d="M5.500 7.500l6-1-1 6z" fill="#2fae22" stroke="#157a10" stroke-width=".5"/><circle cx="3" cy="16.500" r="2.500" fill="url(#gGray)" stroke="#555" stroke-width=".5"/><path d="M9 13h8v5H8" fill="none" stroke="#8a8a8a" stroke-width="1.400"/></svg>
<svg class="ic" style="left:1104px;top:68px" width="20" height="20" viewBox="0 0 20 20"><path d="M9 6l5-3 5 3-5 4z" fill="#e8eef8" stroke="#8a94a8" stroke-width=".6"/><path d="M13 6V1" stroke="#1a6ae8" stroke-width="1"/><path d="M13 6l5-2" stroke="#2fae22" stroke-width="1"/><path d="M13 6l4 3" stroke="#e02020" stroke-width="1"/><path d="M3 12l5-5 1.500 1.500 2-4.500-4.500 2L8.500 7.500l-5 5z" fill="#2fae22" stroke="#157a10" stroke-width=".6"/><path d="M3 12l8 6" stroke="#2fae22" stroke-width="3"/><path d="M1 9l1 5 4-3zM13 19l-1-5-4 3z" fill="#2fae22" stroke="#157a10" stroke-width=".5"/></svg>
<svg class="ic" style="left:1147px;top:68px" width="20" height="20" viewBox="0 0 20 20"><rect x="1" y="1" width="5.600" height="5.600" fill="#20c8f0"/><rect x="7" y="1" width="5.600" height="5.600" fill="#f0d800"/><rect x="13" y="1" width="5.600" height="5.600" fill="#10d010"/><rect x="1" y="7" width="5.600" height="5.600" fill="#f08000"/><rect x="7" y="7" width="5.600" height="5.600" fill="#b87800"/><rect x="13" y="7" width="5.600" height="5.600" fill="#f000f0"/><rect x="1" y="13" width="5.600" height="5.600" fill="#0000e0"/><rect x="7" y="13" width="5.600" height="5.600" fill="#10b010"/><rect x="13" y="13" width="5.600" height="5.600" fill="#909090"/></svg>
<svg class="ic" style="left:1173px;top:68px" width="20" height="20" viewBox="0 0 20 20"><rect x="2.500" y="1.500" width="15" height="17" fill="#f4f6fa" stroke="#5a6a94" stroke-width="1"/><rect x="4" y="3" width="12" height="3" fill="#f6e4a0"/><rect x="5.0" y="8.0" width="3.200" height="2.900" fill="#f04020"/><rect x="8.6" y="8.0" width="3.200" height="2.900" fill="#f0d800"/><rect x="12.2" y="8.0" width="3.200" height="2.900" fill="#10d010"/><rect x="5.0" y="11.3" width="3.200" height="2.900" fill="#20c8f0"/><rect x="8.6" y="11.3" width="3.200" height="2.900" fill="#f000f0"/><rect x="12.2" y="11.3" width="3.200" height="2.900" fill="#f08000"/><rect x="5.0" y="14.6" width="3.200" height="2.900" fill="#0000e0"/><rect x="8.6" y="14.6" width="3.200" height="2.900" fill="#10b010"/><rect x="12.2" y="14.6" width="3.200" height="2.900" fill="#909090"/></svg>
<svg class="ic" style="left:1198px;top:67px" width="22" height="22" viewBox="0 0 22 22"><circle cx="11" cy="11" r="10" fill="#6a9a3a" stroke="#4a7a22" stroke-width="1"/><g transform="translate(1,1)"><path d="M5 15L15 5" stroke="#e8e8e8" stroke-width="2.600" stroke-linecap="round"/><path d="M4 4a3 3 0 1 0 4-1L7 5z" fill="#e8e8e8"/><path d="M6 6l9 9" stroke="#4a80d0" stroke-width="2.600" stroke-linecap="round"/><path d="M14 13l3 3" stroke="#e0e0e0" stroke-width="2.800" stroke-linecap="round"/></g></svg>
<svg class="ic" style="left:1224px;top:68px" width="22" height="20" viewBox="0 0 22 20"><rect x="1" y="1" width="20" height="18" fill="#c4d4ec" stroke="#3a4a74" stroke-width="1"/><rect x="1" y="1" width="20" height="3.500" fill="#3a5a9c"/><path d="M3 7h2M7 7h2M11 7h2M15 7h2M3 10h2" stroke="#b89030" stroke-width="1.600"/><g transform="translate(4,3) scale(.85)"><path d="M5 15L15 5" stroke="#e8e8e8" stroke-width="2.600" stroke-linecap="round"/><path d="M4 4a3 3 0 1 0 4-1L7 5z" fill="#e8e8e8"/><path d="M6 6l9 9" stroke="#4a80d0" stroke-width="2.600" stroke-linecap="round"/><path d="M14 13l3 3" stroke="#e0e0e0" stroke-width="2.800" stroke-linecap="round"/></g></svg>
<svg class="ic" style="left:1250px;top:68px" width="22" height="20" viewBox="0 0 22 20"><rect x="2" y="3" width="18" height="15" fill="none" stroke="#1a3a8a" stroke-width="1.600" stroke-dasharray="2 2"/><path d="M8 9l6-4 6 1v4l-6 1-3 3z" fill="#e8b070" stroke="#8a5a20" stroke-width=".7"/><path d="M6 13v6M3 16h6" stroke="#e8d810" stroke-width="2"/><path d="M6 14v4M4 16h4" stroke="#2a6ae0" stroke-width="1"/></svg>
<svg class="ic" style="left:1277px;top:68px" width="20" height="20" viewBox="0 0 20 20"><path d="M5 3l14-1-4 14L1 17z" fill="#e86060" stroke="#2a5ac8" stroke-width="1.600"/><path d="M8 3l-4 14M12 2.500l-4 14M15.500 2.300l-4 14M4 7l14-1M3 11l14-1M2 14.500l14-1" stroke="#f8d0d0" stroke-width=".8"/></svg>
<div id="leftpanel" class="abs"></div>
<div class="hgrip" style="left:3px;top:121px;width:55px"></div><div class="hgrip" style="left:3px;top:374px;width:55px"></div>
<svg class="ic" style="left:8px;top:134px" width="20" height="20" viewBox="0 0 20 20"><path d="M2 5l6 3M2 9l5 1M3 13l4-1" stroke="#8a93a6" stroke-width="1.400"/><use href="#mag" x="4" y="1" width="17" height="17"/></svg>
<svg class="ic" style="left:8px;top:159.5px" width="20" height="20" viewBox="0 0 20 20"><rect x="3.500" y="4.500" width="13" height="11" fill="url(#gDoc)" stroke="#111" stroke-width="1.200"/><path d="M1 1h4.500L1 5.500zM19 1v4.500L14.500 1zM1 19v-4.500L5.500 19zM19 19h-4.500L19 14.500z" fill="#3fbe2a" stroke="#1c8a10" stroke-width=".5"/></svg>
<svg class="ic" style="left:8px;top:184px" width="20" height="22" viewBox="0 0 20 22"><g transform="translate(1,2)"><use href="#mag" x="1" y="1" width="17" height="17" transform="translate(18,0) scale(-1,1)"/><path d="M10 13l3-2h5v6l-3 2h-5z" fill="#6a6a6a" stroke="#333" stroke-width=".6"/><path d="M10 13h5v6M15 13l3-2" fill="none" stroke="#333" stroke-width=".6"/><path d="M7 6l4 2.500L7 11z" fill="#b8d0f0" stroke="#7a9ac8" stroke-width=".5"/></g><path d="M1 3.500h5M3.500 1v5M1 8h5" stroke="#111" stroke-width="1"/></svg>
<svg class="ic" style="left:8px;top:211px" width="20" height="20" viewBox="0 0 20 20"><path d="M2 10l9-5 8 4-9 7z" fill="#e8eef8" stroke="#8a94a8" stroke-width=".6"/><path d="M7 11V2" stroke="#1a6ae8" stroke-width="1.600"/><path d="M4.800 3.500L7 0l2.200 3.500z" fill="#1a6ae8"/><path d="M7 11l8-5" stroke="#2fae22" stroke-width="1.600"/><path d="M12.500 5.200l4-1-1.600 3.800z" fill="#2fae22"/><path d="M7 11l7 6" stroke="#e02020" stroke-width="1.600"/><path d="M12 17.500l4 1-1.200-4z" fill="#e02020"/><circle cx="7" cy="11" r="1.800" fill="#e8e8e8" stroke="#555" stroke-width=".5"/></svg>
<svg class="ic" style="left:8px;top:236.5px" width="21" height="20" viewBox="0 0 21 20"><path d="M2 2h10l2 2H4zM2 5h11v1.600H2zM2 7.500h11v1.600H2z" fill="#8aa0e8" stroke="#5060a8" stroke-width=".4"/><path d="M3 10h9l1 2-1 1H3z" fill="#d8d8d8" stroke="#555" stroke-width=".5"/><ellipse cx="10" cy="15" rx="7" ry="4" fill="#c9a07a" stroke="#6a4a30" stroke-width=".7"/><circle cx="7" cy="16" r="1.700" fill="#2040e0"/><circle cx="11" cy="16.500" r="1.700" fill="#18b018"/><circle cx="13" cy="13.500" r="1.700" fill="#e02020"/><path d="M19 1.500L11.500 12" stroke="#a06020" stroke-width="1.600"/></svg>
<svg class="ic" style="left:8px;top:262px" width="20" height="20" ><use href="#refB" width="20" height="20"/></svg>
<svg class="ic" style="left:8px;top:287.5px" width="20" height="20" viewBox="0 0 20 20"><ellipse cx="10" cy="18.500" rx="6" ry="1.500" fill="#667" opacity=".4"/><text x="10" y="15" font-family="Liberation Sans,sans-serif" font-weight="bold" font-size="19" text-anchor="middle" fill="#3f78d0" stroke="#1f4a94" stroke-width=".5">?</text></svg>
<svg class="ic" style="left:8px;top:313.5px" width="20" height="20" viewBox="0 0 20 20"><path d="M4 6h12l-1.500 12h-9z" fill="#9cc8e8" stroke="#3a6a94" stroke-width=".8"/><ellipse cx="10" cy="6" rx="6" ry="1.800" fill="#cfe6f6" stroke="#3a6a94" stroke-width=".8"/><path d="M8 3l2-2 2 2z" fill="#e8d810" stroke="#222" stroke-width=".5"/><path d="M8 10l2 2 2-2M9 15l3-3" stroke="#48b838" stroke-width="1.200" fill="none"/></svg>
<svg class="ic" style="left:8px;top:339px" width="20" height="20" viewBox="0 0 20 20"><path d="M3 1v15" stroke="#555" stroke-width="2"/><path d="M6 2v10" stroke="#2a8a8a" stroke-width="1.200"/><circle cx="12" cy="9" r="5.500" fill="none" stroke="#7a4a18" stroke-width="1.600"/><path d="M12 2v14M5 9h14M7 4l10 10M17 4L7 14" stroke="#7a4a18" stroke-width="1"/><path d="M2 16l7-2 9 1-6 4z" fill="#f0901a" stroke="#c86a08" stroke-width=".6"/><path d="M4 18l12-3M6 14.500l5 4" stroke="#fff" stroke-width=".7"/></svg>
<svg class="ic" style="left:33.5px;top:134px" width="20" height="20" viewBox="0 0 20 20"><path d="M2 4l14 14M2 9l10 10M7 2l12 12" stroke="#3a70d0" stroke-width="1.200"/><path d="M4 16L15 3l2.500 2L6.500 18z" fill="#e8a848" stroke="#6a3a10" stroke-width=".7"/><path d="M4 16l-.8 3 3.300-1z" fill="#222"/><path d="M15 3l1.500-1.600 2.500 2L17.500 5z" fill="#e03030" stroke="#6a1010" stroke-width=".5"/></svg>
<svg class="ic" style="left:33.5px;top:159.5px" width="20" height="20" viewBox="0 0 20 20"><path d="M17 17C3 22 -1 8 6 5c6-2 9 6 13 9" fill="none" stroke="#3a70d0" stroke-width="1.800"/><path d="M4 16L15 3l2.500 2L6.500 18z" fill="#e8a848" stroke="#6a3a10" stroke-width=".7"/><path d="M4 16l-.8 3 3.300-1z" fill="#222"/><path d="M15 3l1.500-1.600 2.500 2L17.500 5z" fill="#e03030" stroke="#6a1010" stroke-width=".5"/></svg>
<svg class="ic" style="left:33.5px;top:185px" width="20" height="20" viewBox="0 0 20 20"><path d="M2 3h15v10h-3v4H2z" fill="#fbfbe8" stroke="#e8e010" stroke-width="1.800"/><path d="M5 9l4 5 8-11" fill="none" stroke="#27a81e" stroke-width="3"/><path d="M5 9l4 5 8-11" fill="none" stroke="#7ae060" stroke-width="1"/></svg>
<svg class="ic" style="left:33.5px;top:211px" width="20" height="20" viewBox="0 0 20 20"><path d="M1 14C4 -2 9 4 11 10s5 10 8-4" fill="none" stroke="#3a70d0" stroke-width="1.800"/><path d="M4 16L15 3l2.500 2L6.500 18z" fill="#e8a848" stroke="#6a3a10" stroke-width=".7"/><path d="M4 16l-.8 3 3.300-1z" fill="#222"/><path d="M15 3l1.500-1.600 2.500 2L17.500 5z" fill="#e03030" stroke="#6a1010" stroke-width=".5"/></svg>
<svg class="ic" style="left:33.5px;top:236.5px" width="20" height="20" viewBox="0 0 20 20"><path d="M5 3l13-2-3 15-13 2z" fill="#8ab8f4" stroke="#2a5ac8" stroke-width="1.400"/><path d="M11.500 2L8.500 17M3.500 10.500l13-2" stroke="#e8f2ff" stroke-width="1"/></svg>
<svg class="ic" style="left:33.5px;top:262px" width="20" height="20" viewBox="0 0 20 20"><ellipse cx="11" cy="18" rx="8" ry="1.600" fill="#556" opacity=".4"/><path d="M2 6l8-3.500L18 6v9l-8 4-8-4z" fill="#7a7a7a" stroke="#333" stroke-width=".7"/><path d="M2 6l8 3 8-3-8-3.500z" fill="#d0d0d0" stroke="#333" stroke-width=".5"/><path d="M10 9v10l8-4V6z" fill="#5a5a5a" stroke="#333" stroke-width=".5"/></svg>
<svg class="ic" style="left:32.5px;top:287.5px" width="22" height="20" viewBox="0 0 22 20"><path d="M2 3v16M20 3v16" stroke="#222" stroke-width="1.300"/><path d="M3 7h16" stroke="#e8e010" stroke-width="2.400"/><path d="M3 7h16" stroke="#222" stroke-width=".6"/><path d="M3 7l3-2.500v5zM19 7l-3-2.500v5z" fill="#e8e010" stroke="#222" stroke-width=".5"/></svg>
<svg class="ic" style="left:33.5px;top:313.5px" width="20" height="21" viewBox="0 0 20 21"><ellipse cx="11" cy="19" rx="7" ry="1.500" fill="#888" opacity=".35"/><path d="M2 7.500L9 1.500v3.500c6 0 9 4 7.500 10-.3 1.300-1.200 2.600-2.500 3.500 1.500-4-.5-7.500-5-7.500v3.500z" fill="url(#gGray)" stroke="#8a8a8a" stroke-width=".6"/></svg>
<svg class="ic" style="left:33.5px;top:339px" width="21" height="20" viewBox="0 0 21 20"><path d="M6 8h9l4 3v8H6z" fill="#fff" stroke="#111" stroke-width="1"/><rect x="9" y="15" width="6" height="2.500" fill="#ddd" stroke="#555" stroke-width=".5"/><path d="M1 4l2-2h5l1.500 1.500H15V12H1z" fill="#e8b94d" stroke="#b8862a" stroke-width=".6"/><path d="M1 13l2-7h13l-2 7z" fill="url(#gFolder)" stroke="#b8862a" stroke-width=".6"/><path d="M9 3h4v-2l4 3.500-4 3.500v-2H9z" fill="#3fae2a" stroke="#1c7a10" stroke-width=".5"/></svg>
<svg class="ic" style="left:48.0px;top:132.5px" width="5" height="4"><path d="M0 0h5L2.500 3.500z" fill="#000"/></svg>
<svg class="ic" style="left:48.0px;top:158.0px" width="5" height="4"><path d="M0 0h5L2.500 3.500z" fill="#000"/></svg>
<svg class="ic" style="left:48.0px;top:183.5px" width="5" height="4"><path d="M0 0h5L2.500 3.500z" fill="#000"/></svg>
<svg class="ic" style="left:22.5px;top:183.5px" width="5" height="4"><path d="M0 0h5L2.500 3.500z" fill="#000"/></svg>
<svg class="ic" style="left:48.0px;top:209.5px" width="5" height="4"><path d="M0 0h5L2.500 3.500z" fill="#000"/></svg>
<svg class="ic" style="left:22.5px;top:209.5px" width="5" height="4"><path d="M0 0h5L2.500 3.500z" fill="#000"/></svg>
<svg class="ic" style="left:48.0px;top:235.0px" width="5" height="4"><path d="M0 0h5L2.500 3.500z" fill="#000"/></svg>
<svg class="ic" style="left:22.5px;top:235.0px" width="5" height="4"><path d="M0 0h5L2.500 3.500z" fill="#000"/></svg>
<svg class="ic" style="left:48.0px;top:260.5px" width="5" height="4"><path d="M0 0h5L2.500 3.500z" fill="#000"/></svg>
<svg class="ic" style="left:22.5px;top:260.5px" width="5" height="4"><path d="M0 0h5L2.500 3.500z" fill="#000"/></svg>
<svg class="ic" style="left:48.0px;top:286.0px" width="5" height="4"><path d="M0 0h5L2.500 3.500z" fill="#000"/></svg>
<svg class="ic" style="left:22.5px;top:286.0px" width="5" height="4"><path d="M0 0h5L2.500 3.500z" fill="#000"/></svg>
<svg class="ic" style="left:48.0px;top:312.0px" width="5" height="4"><path d="M0 0h5L2.500 3.500z" fill="#000"/></svg>
<svg class="ic" style="left:22.5px;top:312.0px" width="5" height="4"><path d="M0 0h5L2.500 3.500z" fill="#000"/></svg>
<svg class="ic" style="left:22.5px;top:337.5px" width="5" height="4"><path d="M0 0h5L2.500 3.500z" fill="#000"/></svg>
<div id="viewport" class="abs">
<svg class="abs" style="left:0;top:0" width="1860" height="891" viewBox="60 109 1860 891" shape-rendering="crispEdges">
<defs>
<linearGradient id="mCyl" gradientUnits="userSpaceOnUse" x1="1630" y1="452" x2="1650" y2="520"><stop offset="0" stop-color="#7c7c00"/><stop offset=".22" stop-color="#9a9a00"/><stop offset=".55" stop-color="#6e6e00"/><stop offset="1" stop-color="#262600"/></linearGradient>
<linearGradient id="mRod" gradientUnits="userSpaceOnUse" x1="0" y1="0" x2="2" y2="8" spreadMethod="pad"><stop offset="0" stop-color="#5a10b0"/><stop offset=".4" stop-color="#4a0c9a"/><stop offset="1" stop-color="#1a0440"/></linearGradient>
<linearGradient id="mPinY" x1="0" x2="1" y1="0" y2="0"><stop offset="0" stop-color="#bcbc00"/><stop offset=".5" stop-color="#b2b200"/><stop offset=".8" stop-color="#7c7c00"/><stop offset="1" stop-color="#3e3e00"/></linearGradient>
<linearGradient id="mPinG" x1="0" x2="1" y1="0" y2="0"><stop offset="0" stop-color="#3e9e42"/><stop offset=".5" stop-color="#3c9a40"/><stop offset=".85" stop-color="#276a2a"/><stop offset="1" stop-color="#184a1a"/></linearGradient>
<linearGradient id="mHoleG" x1="0" x2="0" y1="0" y2="1"><stop offset="0" stop-color="#1f5a22"/><stop offset=".5" stop-color="#3fa444"/><stop offset="1" stop-color="#46b04a"/></linearGradient>
<linearGradient id="mHoleG2" x1="0" x2="0" y1="0" y2="1"><stop offset="0" stop-color="#2a7a2e"/><stop offset="1" stop-color="#1c5a20"/></linearGradient>
<linearGradient id="mHoleP" x1="0" x2="0" y1="0" y2="1"><stop offset="0" stop-color="#5c4e4e"/><stop offset="1" stop-color="#a89494"/></linearGradient>
<linearGradient id="mHoleO" x1="0.3" x2=".5" y1="0" y2="1"><stop offset="0" stop-color="#4e4e00"/><stop offset=".45" stop-color="#808000"/><stop offset="1" stop-color="#8a8a00"/></linearGradient>
<linearGradient id="mAirL" gradientUnits="userSpaceOnUse" x1="1240" y1="470" x2="1262" y2="520"><stop offset="0" stop-color="#6a6a6a"/><stop offset=".8" stop-color="#707070"/><stop offset="1" stop-color="#505050"/></linearGradient>
<linearGradient id="mYBlk" x1="0" x2="0" y1="0" y2="1"><stop offset="0" stop-color="#8c8c00"/><stop offset=".8" stop-color="#8a8a00"/><stop offset="1" stop-color="#4a4a00"/></linearGradient>
<linearGradient id="mAirS" gradientUnits="userSpaceOnUse" x1="1251" y1="516" x2="1262.500" y2="521"><stop offset="0" stop-color="#444"/><stop offset=".6" stop-color="#777"/><stop offset="1" stop-color="#8a8a8a"/></linearGradient>
<radialGradient id="mScrew" cx=".38" cy=".3" r=".75"><stop offset="0" stop-color="#d82020"/><stop offset=".45" stop-color="#a01010"/><stop offset="1" stop-color="#3a0202"/></radialGradient>
<linearGradient id="mRingF" x1="0" x2="1" y1="0" y2="0"><stop offset="0" stop-color="#d0d000"/><stop offset=".35" stop-color="#ecec00"/><stop offset=".7" stop-color="#c0c000"/><stop offset=".9" stop-color="#6a6a00"/><stop offset="1" stop-color="#c8c800"/></linearGradient>
<linearGradient id="mRingI" x1="0" x2="1" y1="0" y2="0"><stop offset="0" stop-color="#505000"/><stop offset=".3" stop-color="#b0b000"/><stop offset=".6" stop-color="#f0f000"/><stop offset="1" stop-color="#d0d000"/></linearGradient>
<linearGradient id="mYCh" x1="0" x2=".25" y1="0" y2="1"><stop offset="0" stop-color="#9a9a00"/><stop offset=".45" stop-color="#bcbc00"/><stop offset="1" stop-color="#8a8a00"/></linearGradient>
<linearGradient id="mYBt" x1="0" x2=".2" y1="0" y2="1"><stop offset="0" stop-color="#a2a200"/><stop offset="1" stop-color="#4a4a00"/></linearGradient>
<linearGradient id="mSlotE" x1="0" x2="1" y1="0" y2="0"><stop offset="0" stop-color="#5e5e72"/><stop offset=".5" stop-color="#8686a2"/><stop offset="1" stop-color="#8c8caa"/></linearGradient>
</defs>
<g stroke="#000" stroke-width="1" stroke-linejoin="round">
<!-- hydraulic cylinder (behind) -->
<g id="hyd">
<polygon points="1506.500,492.400 1522.200,497.200 1530,540 1535,580 1538,620 1512,623 1510,612" fill="#5e5e72"/>
<polygon points="1506.500,492 1519,495.500 1522.200,497.200 1508,499.500" fill="#8a8aa8" stroke-width=".6"/>
<polygon points="1506.500,488 1515.500,491.700 1516,493.500 1506.500,491" fill="#3c0a86" stroke-width=".5"/>
<!-- upper rods -->
<polygon points="1547,473 1689,436 1692,442 1550,479" fill="#3e0a86" stroke="#1a0440" stroke-width=".6"/>
<polygon points="1557,479 1708,441 1711,448 1560,486" fill="#330874" stroke="#1a0440" stroke-width=".6"/>
<polygon points="1553,478 1706,440 1707,442 1554,480" fill="#8c8c00" stroke="none"/>
<!-- body -->
<polygon points="1560,490 1711,448 1717,484 1567,526" fill="url(#mCyl)" stroke-width=".7"/>
<!-- lower rod -->
<polygon points="1566,524 1716,484 1718,491 1568,533" fill="#3e0a86" stroke="#1a0440" stroke-width=".6"/>
<!-- nuts -->
<polygon points="1741.500,432.500 1749,431.500 1753,437 1752,442 1745,443.500 1742,441" fill="#380a7c" stroke="#0c0220" stroke-width=".9"/>
<polygon points="1750.300,477 1757,475.500 1760.700,482 1759,488.500 1752,490.300 1750.500,488" fill="#380a7c" stroke="#0c0220" stroke-width=".9"/>
<!-- right block -->
<polygon points="1685.900,434.500 1708.500,438.600 1714,447.200 1720.800,494.300 1720.300,501.100 1711.300,498.400 1709.500,454.900 1691.300,441.300" fill="#a8a800" stroke-width=".8"/>
<polygon points="1685.900,434.500 1716.700,425.400 1738.500,431.300 1708.500,438.600" fill="#9e9e00"/>
<polygon points="1708.500,438.600 1738.500,431.300 1742.500,440.400 1714,447.200" fill="url(#mYCh)"/>
<polygon points="1714,447.200 1742.500,440.400 1750.300,487.500 1720.800,494.300" fill="#808000"/>
<polygon points="1720.800,494.300 1750.300,487.500 1750.300,493 1720.300,501.100" fill="url(#mYBt)" stroke-width=".7"/>
<!-- left block -->
<polygon points="1506,480.500 1533.200,473 1552.300,478.100 1515.500,488.600" fill="#9e9e00"/>
<polygon points="1515.500,488.600 1552.300,478.100 1559,487.700 1523.600,496.700" fill="url(#mYCh)"/>
<polygon points="1523.600,496.700 1559,487.700 1567,533.500 1530.800,544" fill="#808000"/>
<polygon points="1530.800,544 1567,533.500 1566,542 1532.200,550.200" fill="url(#mYBt)" stroke-width=".7"/>
</g>
<!-- top plate -->
<polygon points="715,345 945,408 947,470 718,410" fill="#7c7c96"/>
<polygon points="945,408 968,408 970,470 947,470" fill="#8a8aa8"/>
<polygon points="968,408 1501,350 1503,415 970,470" fill="#5e5e72"/>
<polygon points="715,345 1261,286 1501,350 968,408 945,408" fill="#c400c4" stroke="#ff00ff" stroke-width="1.2"/>
<!-- slot -->
<polygon points="1031,435 1424,393 1424,422 1032,464" fill="#5e5e72"/>
<polygon points="1031,435 1036,434.500 1037,463.500 1032,464" fill="#6c6c84" stroke-width=".7"/>
<polygon points="1397,396 1420,393.500 1421,421.500 1397,424" fill="url(#mSlotE)" stroke-width=".7"/>
<polygon points="1420,393.500 1424,393 1424.500,421 1421,421.500" fill="#a4a4c0" stroke-width=".6"/>
<!-- green band -->
<polygon points="718,410 947,470 948,496 719,435" fill="#3c963c"/>
<polygon points="947,470 970,470 971,497 948,496" fill="#40a848"/>
<polygon points="970,470 1503,415 1504,440 971,497" fill="#2d732d"/>
<polygon points="1034,463.600 1421,422 1415,424 1034,465.500" fill="#3c963c" stroke-width=".7"/>
<!-- pink plate -->
<polygon points="719,435 948,496 954,667 725,606" fill="#a59090"/>
<polygon points="948,496 971,497 977,668 954,667" fill="#b09c9c"/>
<polygon points="971,497 1504,440 1510.500,612 977,668" fill="#7d6c6c"/>
<!-- green block -->
<polygon points="725,606 954,667 960,780 730,718" fill="#3c963c"/>
<polygon points="954,667 977,668 982,780 960,780" fill="#40a848"/>
<polygon points="977,668 1510,612 1515,724 982,780" fill="#2d732d"/>
<!-- base plate -->
<polygon points="736,884 966,946 966,980 737.500,918" fill="#7c7c96"/>
<polygon points="966,946 990,946 990,980 966,980" fill="#8a8aa8"/>
<polygon points="990,946 1521,890 1523,924 990,980" fill="#5e5e72"/>
<polygon points="962,944 1511,887.500 1521,890 990,946 966,946" fill="#8a8aa8" stroke-width=".6"/>
<!-- interior -->
<polygon points="780,731 917,769 922,882 786,848" fill="#a8a800" stroke="none"/>
<polygon points="811.500,739.700 836.800,746.600 840.500,848.500 815,848.500" fill="url(#mPinY)" stroke="none"/>
<polygon points="866,754.800 906,765.800 908.600,848.500 869.700,848.500" fill="url(#mPinG)" stroke="none"/>
<polygon points="906,765.800 917,769 920,855 908.800,855" fill="#3a923a" stroke="none"/>
<!-- ejector plates -->
<polygon points="786,847.500 800,845 921,851 921,882.500" fill="#6a6a80" stroke-width=".7"/>
<polygon points="786,848.500 917.500,882.500 917.500,902.500 786,868.700" fill="#7c7c96" stroke-width=".7"/>
<polygon points="917.500,882.500 922,882 922,902 917.500,902.500" fill="#8a8aa8" stroke-width=".6"/>
<polygon points="786,868.700 917.500,902.500 918.700,928.700 787.500,893.700" fill="#00a8a8" stroke-width=".7"/>
<polygon points="917.500,902.500 922,902 923,929 918.700,928.700" fill="#00c0c0" stroke-width=".6"/>
<polygon points="787.500,893.700 918.700,928.700 923,934 787,897" fill="#6a6a80" stroke-width=".6"/>
<!-- small buttons -->
<path d="M842,844 a13,4.500 0 0 1 26,0 v8 a13,4.500 0 0 1 -26,0 z" fill="#6e6e00" stroke-width=".7"/><ellipse cx="855" cy="844" rx="13" ry="4.500" fill="#8c8c00" stroke-width=".7"/><path d="M846,843.500 q8,-4 17,-1 M850,845.500 h9" fill="none" stroke="#000" stroke-width="1.300"/>
<path d="M900,859.500 a10.500,4 0 0 1 21,0 v8 a10.500,4 0 0 1 -21,0 z" fill="#6e6e00" stroke-width=".7"/><ellipse cx="910.500" cy="859.500" rx="10.500" ry="4" fill="#8c8c00" stroke-width=".7"/><path d="M904,859 q7,-3.500 14,-1 M907,861 h8" fill="none" stroke="#000" stroke-width="1.200"/>
<ellipse cx="799" cy="846.500" rx="6" ry="1.500" fill="#2a2a00" stroke="none"/>
<!-- risers -->
<polygon points="730,718 780,731 786,897 746,886 746,857 736,854" fill="#dcdc00"/>
<polygon points="917,769 960,780 962.500,944 924,935" fill="#dcdc00"/>
<polygon points="960,780 982,780 989,915 961,916" fill="#ecec00"/>
<polygon points="982,780 1515,724 1520.500,860 989,915" fill="#a8a800"/>
<polygon points="961,916 989,915 1520.500,860 1510,862.500 1510.700,887.500 962.500,944" fill="#a8a800"/>
<!-- holes on left faces -->
<g stroke-width=".8">
<ellipse cx="823.800" cy="492.700" rx="2.900" ry="5.800" fill="#767600"/>
<ellipse cx="852.900" cy="500.700" rx="2.900" ry="5.800" fill="#767600"/>
<ellipse cx="841" cy="551.900" rx="8.600" ry="20" fill="url(#mHoleP)" stroke="#2a2222"/>
<ellipse cx="841.600" cy="552.200" rx="7" ry="18.300" fill="none" stroke="#e8dcdc" stroke-width=".7"/>
<ellipse cx="846" cy="693.700" rx="8.400" ry="19.800" fill="url(#mHoleG)" stroke="#031a03" stroke-width="1"/>
<ellipse cx="846.600" cy="694" rx="6.600" ry="17.800" fill="none" stroke="#7ad07a" stroke-width=".7"/>
<ellipse cx="817" cy="690" rx="2.600" ry="5.600" fill="#3c963c"/>
<ellipse cx="883.700" cy="707.500" rx="2.600" ry="5.600" fill="#3c963c"/>
<!-- holes on right faces -->
<ellipse cx="1136" cy="496.500" rx="5" ry="5.600" fill="#8c8c00"/>
<path d="M1133,499 l5,-6" fill="none" stroke-width=".6"/>
<ellipse cx="1153.100" cy="516.400" rx="15.500" ry="17.300" fill="url(#mHoleO)" stroke-width="1.200"/>
<path d="M1140,522 a13.800,15.600 0 0 0 27,-3" fill="none" stroke="#c4c420" stroke-width="1"/><ellipse cx="1153.600" cy="516.200" rx="13.600" ry="15.600" fill="none" stroke="#000" stroke-width=".6"/>
<ellipse cx="1161" cy="722.500" rx="15.500" ry="17.500" fill="url(#mHoleG)"/>
<ellipse cx="1161.500" cy="722.500" rx="13.800" ry="15.800" fill="none" stroke="#7ad07a" stroke-width=".7"/>
<ellipse cx="1318" cy="705.500" rx="15.500" ry="17.500" fill="url(#mHoleG)"/>
<ellipse cx="1318.500" cy="705.500" rx="13.800" ry="15.800" fill="none" stroke="#7ad07a" stroke-width=".7"/>
<ellipse cx="1192.500" cy="719" rx="5" ry="5.600" fill="#2d732d"/><path d="M1190,722 l4,-7" fill="none" stroke-width=".6"/>
<ellipse cx="1263" cy="712" rx="5" ry="5.600" fill="#2d732d"/><path d="M1260.500,715 l4,-7" fill="none" stroke-width=".6"/>
</g>
<!-- slider block -->
<polygon points="1186,491 1227,486 1325,500 1326,510 1334,554 1205,565" fill="#717100"/>
<polygon points="1177.500,505 1186,491 1205,565 1206,644 1182.500,690 1179,600" fill="#737300"/>
<path d="M1205,565 L1206,644" fill="none"/>
<polygon points="1176,536 1179,536 1180,563 1177,562" fill="#7c3c42" stroke-width=".5"/>
<polygon points="1177.500,562.500 1184.500,579 1180,590" fill="#1e90d0" stroke-width=".5"/>
<polygon points="1205,565 1334,554 1336,631 1206,644" fill="#5c5c00"/>
<polygon points="1206,644 1336,631 1311,677.500 1182.500,690" fill="#323000"/>
<ellipse cx="1220" cy="530.500" rx="8" ry="8.500" fill="#4a4a00" stroke-width=".7"/>
<path d="M1220,522 a8,8.500 0 0 0 0,17 a4.500,8.500 0 0 1 0,-17" fill="#6a6a00" stroke="none"/>
<!-- pneumatic cylinder -->
<polygon points="1280.300,490.200 1334,480.200 1294.600,546 1244.500,553.200" fill="#2e2e2e"/>
<polygon points="1258.500,436 1269,486.500 1233,547.400 1221.600,497.300" fill="#6d6d6d"/>
<polygon points="1269,486.500 1280.300,490.200 1244.500,553.200 1233,547.400" fill="url(#mAirS)"/>
<polygon points="1334,480.200 1332,486 1296,547 1294.600,546" fill="#1c1c1c" stroke-width=".5"/>
<path d="M1260,433.300 Q1257.600,434 1258.300,437 L1272.500,487 Q1273.500,490.600 1277,490 L1331.500,480.600 Q1335,479.800 1334.200,476.800 L1320,428.300 Q1319,425.200 1315.500,425.700 Z" fill="#727272"/>
<g stroke-width=".7">
<circle cx="1266.7" cy="438.4" r="8" fill="url(#mScrew)" stroke="#1a0000"/><path d="M1261.2,439.4 q5.500,-5 11,-1.500 M1262.2,441.9 q4.500,-4 9.500,-1.200" fill="none" stroke="#4a0404" stroke-width=".8"/>
<circle cx="1314.6" cy="433.6" r="8" fill="url(#mScrew)" stroke="#1a0000"/><path d="M1309.1,434.6 q5.500,-5 11,-1.500 M1310.1,437.1 q4.500,-4 9.500,-1.200" fill="none" stroke="#4a0404" stroke-width=".8"/>
<circle cx="1326" cy="478.7" r="8" fill="url(#mScrew)" stroke="#1a0000"/><path d="M1320.5,479.7 q5.500,-5 11,-1.500 M1321.5,482.2 q4.500,-4 9.500,-1.200" fill="none" stroke="#4a0404" stroke-width=".8"/>
<circle cx="1278.1" cy="483.4" r="8" fill="url(#mScrew)" stroke="#1a0000"/><path d="M1272.6,484.4 q5.500,-5 11,-1.500 M1273.6,486.9 q4.500,-4 9.500,-1.200" fill="none" stroke="#4a0404" stroke-width=".8"/>
<ellipse cx="1296.700" cy="456" rx="13" ry="12.500" fill="#2a2a30" stroke="#111"/>
<ellipse cx="1296.500" cy="457.500" rx="11.500" ry="10.500" fill="#9c9ca8" stroke="#222" stroke-width=".5"/>
<path d="M1286,460 a11,9 0 0 0 21,1" fill="none" stroke="#e0e0ea" stroke-width="1.400"/>
<ellipse cx="1297" cy="455" rx="9.500" ry="8.600" fill="#6a6a10" stroke="#181800"/>
<path d="M1290,452 l6.500,-4 7.500,2.500 .5,6 -6.500,5 -7,-3.500z" fill="#a4a410" stroke="#3a3a00" stroke-width=".5"/>
<path d="M1297.500,461.500 l-.5,-8 7,-3" fill="none" stroke="#d8d830" stroke-width=".6"/>
</g>
<!-- top plate holes -->
<g stroke="none">
<ellipse cx="789.500" cy="345.700" rx="27" ry="4.600" fill="#b8b800"/>
<ellipse cx="981" cy="397" rx="27" ry="4.600" fill="#b8b800"/>
<ellipse cx="1236" cy="298" rx="27" ry="4.300" fill="#b8b800"/>
<ellipse cx="1426" cy="350" rx="27" ry="4.300" fill="#b8b800"/>
<g fill="#7c7c9c">
<ellipse cx="849.500" cy="345.700" rx="9" ry="1.700"/><ellipse cx="935" cy="345" rx="11" ry="2"/><ellipse cx="817.500" cy="358" rx="12" ry="2"/>
<ellipse cx="927.500" cy="387.500" rx="12" ry="2"/><ellipse cx="1006" cy="387.500" rx="10" ry="1.700"/><ellipse cx="1044.500" cy="375" rx="12" ry="2"/>
<ellipse cx="1170" cy="320.500" rx="11" ry="2"/><ellipse cx="1209.500" cy="307" rx="10" ry="1.700"/><ellipse cx="1287.500" cy="307.500" rx="12" ry="2"/>
<ellipse cx="1279.500" cy="350" rx="12" ry="2"/><ellipse cx="1366" cy="350" rx="10" ry="1.700"/><ellipse cx="1397.500" cy="337" rx="11" ry="2"/>
</g>
<ellipse cx="972.500" cy="362" rx="4.500" ry="1.200" fill="#ff20ff"/>
</g>
<g stroke-width="1" shape-rendering="crispEdges">
<ellipse cx="1108" cy="348.300" rx="56" ry="7.600" fill="url(#mRingF)" stroke="#ff30ff" stroke-width=".8" transform="rotate(-2.600 1108 348.300)"/>
<path d="M1058,352 q20,6 50,5 q30,-1 48,-7" fill="none" stroke="#000" stroke-width="1.300" stroke-dasharray="9 3 5 2"/>
<ellipse cx="1107.500" cy="342.500" rx="43.500" ry="9.700" fill="url(#mRingF)" stroke="#000" stroke-width="1.200"/>
<ellipse cx="1107.500" cy="340.300" rx="42" ry="7.600" fill="#000"/>
<ellipse cx="1107.500" cy="339.600" rx="39.500" ry="5.600" fill="url(#mRingI)" stroke="#e8e800" stroke-width="1" stroke-dasharray="6 4 10 3"/>
<path d="M1078,341.700 L1142,339.200" stroke="#ff30ff" stroke-width="1.200" fill="none"/>
</g>
</g>
</svg>
<svg class="abs" style="left:830px;top:397px;opacity:.92" width="48" height="36" viewBox="890 506 48 36">
<defs><linearGradient id="wmG" x1="0" x2="0" y1="0" y2="1"><stop offset="0" stop-color="#ee6a1e"/><stop offset=".55" stop-color="#f6851c"/><stop offset="1" stop-color="#fba41c"/></linearGradient></defs>
<g fill="url(#wmG)">
<path d="M891.300,516.700 l2.400,.6 v19.500 l10,1.200 v2 h-12.400z"/>
<path d="M895,512 l2.600,1.200 v21.300 l8,1.800 -1,1.200 -9.600,-1.800z"/>
<path d="M898.700,508 l3.300,2.500 v22.500 q3.500,1.500 6,4 l-2,.8 q-3,-2.500 -7.300,-3.300z"/>
<path d="M936.700,516.700 l-2.400,.6 v19.500 l-10,1.200 v2 h12.400z"/>
<path d="M933,512 l-2.600,1.200 v21.300 l-8,1.800 1,1.200 9.600,-1.800z"/>
<path d="M929.300,508 l-3.300,2.500 v22.500 q-3.500,1.500 -6,4 l2,.8 q3,-2.500 7.300,-3.300z"/>
<rect x="908.500" y="537" width="10" height="2.600" rx="1.200" fill="#f0601a"/>
<path d="M914,510 q-9,1 -10,9 q0,5 3.500,8 q-1.500,-7 4,-10 l.5,20 h3.500 v-9 q8,-3 5.500,-10 q3.500,8 -3,13 l-3,2 v-21.500 q-1.500,-1.500 -1,-1.500z"/>
<path d="M913,536 q10,-2 10,-11 q0,-3 -1.500,-5.500 q1,7 -5,10.500 q-3,2 -3.500,6z"/>
</g></svg>
<div class="abs" style="left:886.4px;top:402.4px;width:90px;height:24px;line-height:24px;font-size:17px;font-weight:700;color:#f5821c;white-space:nowrap;letter-spacing:-.45px;opacity:.95">智造资料网</div>
<div class="abs" style="left:887px;top:425.20000000000005px;width:90px;height:6px;line-height:6px;font-size:4.900px;font-weight:bold;font-style:italic;color:#f5821c;white-space:nowrap;opacity:.9;letter-spacing:-.29px">INTELLIGENT MANUFACTURING DATA</div>
<svg class="abs" style="left:40px;top:741px" width="90" height="110" viewBox="100 850 90 110">
<polygon points="120.300,916.500 126,914.800 142.700,914.400 142.700,937 131,945 120.300,941" fill="#8a9cc0" opacity=".5"/>
<path d="M120.300,916.500 L126,914.800 L142.700,914.400 L142.700,937 M120.300,916.500 L129,918 L131,922 L131,944" fill="none" stroke="#d8d8d8" stroke-width="1"/>
<path d="M117,876 L119.500,941" stroke="#00d8e8" stroke-width="2.400"/>
<path d="M113,877.500 L116.700,868 L121,877 z" fill="#00e0f0"/>
<path d="M123,941.500 L158,938" stroke="#10b010" stroke-width="2.600"/>
<path d="M140,944.500 L154,943" stroke="#e8e810" stroke-width="1.200"/>
<path d="M155,934 L165,937.300 L156,942.500 z" fill="#10a010"/>
<circle cx="119.800" cy="942" r="4" fill="#7a7a7a"/>
<path d="M122,942 L129,944.500" stroke="#e01010" stroke-width="2.600"/>
<ellipse cx="130.500" cy="944.800" rx="4" ry="3.600" fill="#f01010"/>
<path d="M133.500,943.500 L140.500,951 M140.500,943.500 L133,951" stroke="#e0e0e0" stroke-width="1"/>
<text x="111.500" y="864.800" font-family="Liberation Sans,sans-serif" font-size="11.500" fill="#d8d8d8">Z</text>
<text x="166.500" y="941" font-family="Liberation Sans,sans-serif" font-size="11.500" fill="#e81010">Y</text>
</svg>
<div class="vb" style="left:4px;top:4px"><svg style="position:absolute;left:0px;top:0px" width="24" height="24" viewBox="0 0 24 24"><rect x="3" y="4" width="18" height="3.500" fill="#4a6496"/><rect x="3" y="10.200" width="18" height="3.500" fill="#4a6496"/><rect x="3" y="16.400" width="18" height="3.500" fill="#4a6496"/></svg></div>
<div class="vb" style="left:32px;top:4px"><svg style="position:absolute;left:0px;top:0px" width="24" height="24" viewBox="0 0 24 24"><rect x="7" y="7" width="11" height="10" fill="url(#gDoc)" stroke="#e8eef8" stroke-width=".6"/><path d="M3 3h4.500L3 7.500zM21 3v4.500L16.500 3zM3 21v-4.500L7.500 21zM21 21h-4.500L21 16.500z" fill="#4fe030" stroke="#1c8a10" stroke-width=".5"/></svg></div>
<div class="vb" style="left:60px;top:4px"><svg style="position:absolute;left:0px;top:0px" width="24" height="24" viewBox="0 0 24 24"><path d="M4 7l6 3M4 11l5 1M5 15l4-1" stroke="#c0c8d8" stroke-width="1.400"/><use href="#mag" x="5" y="3" width="17" height="17" transform="translate(27,0) scale(-1,1)"/></svg></div>
<div class="vb" style="left:88px;top:4px"><svg style="position:absolute;left:0px;top:0px" width="24" height="24" viewBox="0 0 24 24"><path d="M3 14l9-5 9 4-9 7z" fill="none" stroke="#5a5c70" stroke-width=".8"/><path d="M11 14V5" stroke="#1a7af8" stroke-width="1.800"/><path d="M8.500 6.500L11 2.500l2.500 4z" fill="#1a7af8"/><path d="M11 14l8-6" stroke="#2fce22" stroke-width="1.800"/><path d="M16 7.500l4.500-1.500-2 4.300z" fill="#2fce22"/><path d="M11 14l7 6" stroke="#e02020" stroke-width="1.800"/><path d="M15.500 20.500l4.500 1-1.500-4.500z" fill="#e02020"/><circle cx="11" cy="14" r="1.800" fill="#e8e8e8" stroke="#555" stroke-width=".5"/></svg></div>
<div class="vb" style="left:116px;top:4px"><svg style="position:absolute;left:0px;top:0px" width="24" height="24" viewBox="0 0 24 24"><path d="M12.5 3.2L3.2 6.6 M12.5 3.2L21.5 6.4 M3.2 6.6L12.5 10.6 M21.5 6.4L12.5 10.6 M3.2 6.6L3.2 16 M21.5 6.4L21.5 16 M12.5 10.6L12.5 21.5 M3.2 16L12.5 21.5 M21.5 16L12.5 21.5 M12.5 3.2L12.5 11.8 M3.2 16L12.5 11.8 M21.5 16L12.5 11.8" fill="none" stroke="#0a0a0a" stroke-width="1.250" stroke-linecap="round"/><path d="M12.5 3.2 L21.5 6.4 L12.5 10.6 L3.2 6.6z" fill="url(#gGreenFace)" stroke="#18a010" stroke-width=".8" stroke-linejoin="round"/></svg></div>
<div class="vb" style="left:144px;top:4px"><svg style="position:absolute;left:0px;top:0px" width="24" height="24" viewBox="0 0 24 24"><path d="M12.5 11.8 L21.5 16 L12.5 21.5 L3.2 16z" fill="url(#gGreenFace)" stroke="#18a010" stroke-width=".8" stroke-linejoin="round"/><path d="M12.5 3.2L3.2 6.6 M12.5 3.2L21.5 6.4 M3.2 6.6L12.5 10.6 M21.5 6.4L12.5 10.6 M3.2 6.6L3.2 16 M21.5 6.4L21.5 16 M12.5 10.6L12.5 21.5 M3.2 16L12.5 21.5 M21.5 16L12.5 21.5 M12.5 3.2L12.5 11.8 M3.2 16L12.5 11.8 M21.5 16L12.5 11.8" fill="none" stroke="#0a0a0a" stroke-width="1.250" stroke-linecap="round"/></svg></div>
<div class="vb" style="left:172px;top:4px"><svg style="position:absolute;left:0px;top:0px" width="24" height="24" viewBox="0 0 24 24"><path d="M12.5 3.2 L12.5 11.8 L3.2 16 L3.2 6.6z" fill="url(#gGreenFace)" stroke="#18a010" stroke-width=".8" stroke-linejoin="round"/><path d="M12.5 3.2L3.2 6.6 M12.5 3.2L21.5 6.4 M3.2 6.6L12.5 10.6 M21.5 6.4L12.5 10.6 M3.2 6.6L3.2 16 M21.5 6.4L21.5 16 M12.5 10.6L12.5 21.5 M3.2 16L12.5 21.5 M21.5 16L12.5 21.5 M12.5 3.2L12.5 11.8 M3.2 16L12.5 11.8 M21.5 16L12.5 11.8" fill="none" stroke="#0a0a0a" stroke-width="1.250" stroke-linecap="round"/></svg></div>
<div class="vb" style="left:200px;top:4px"><svg style="position:absolute;left:0px;top:0px" width="24" height="24" viewBox="0 0 24 24"><path d="M12.5 3.2L3.2 6.6 M12.5 3.2L21.5 6.4 M3.2 6.6L12.5 10.6 M21.5 6.4L12.5 10.6 M3.2 6.6L3.2 16 M21.5 6.4L21.5 16 M12.5 10.6L12.5 21.5 M3.2 16L12.5 21.5 M21.5 16L12.5 21.5 M12.5 3.2L12.5 11.8 M3.2 16L12.5 11.8 M21.5 16L12.5 11.8" fill="none" stroke="#0a0a0a" stroke-width="1.250" stroke-linecap="round"/><path d="M12.5 10.6 L21.5 6.4 L21.5 16 L12.5 21.5z" fill="url(#gGreenFace)" stroke="#18a010" stroke-width=".8" stroke-linejoin="round"/></svg></div>
<div class="vb" style="left:228px;top:4px"><svg style="position:absolute;left:0px;top:0px" width="24" height="24" viewBox="0 0 24 24"><path d="M12.5 3.2L3.2 6.6 M12.5 3.2L21.5 6.4 M3.2 6.6L12.5 10.6 M21.5 6.4L12.5 10.6 M3.2 6.6L3.2 16 M21.5 6.4L21.5 16 M12.5 10.6L12.5 21.5 M3.2 16L12.5 21.5 M21.5 16L12.5 21.5 M12.5 3.2L12.5 11.8 M3.2 16L12.5 11.8 M21.5 16L12.5 11.8" fill="none" stroke="#0a0a0a" stroke-width="1.250" stroke-linecap="round"/><path d="M3.2 6.6 L12.5 10.6 L12.5 21.5 L3.2 16z" fill="url(#gGreenFace)" stroke="#18a010" stroke-width=".8" stroke-linejoin="round"/></svg></div>
<div class="vb" style="left:256px;top:4px"><svg style="position:absolute;left:0px;top:0px" width="24" height="24" viewBox="0 0 24 24"><path d="M12.5 3.2 L21.5 6.4 L21.5 16 L12.5 11.8z" fill="url(#gGreenFace)" stroke="#18a010" stroke-width=".8" stroke-linejoin="round"/><path d="M12.5 3.2L3.2 6.6 M12.5 3.2L21.5 6.4 M3.2 6.6L12.5 10.6 M21.5 6.4L12.5 10.6 M3.2 6.6L3.2 16 M21.5 6.4L21.5 16 M12.5 10.6L12.5 21.5 M3.2 16L12.5 21.5 M21.5 16L12.5 21.5 M12.5 3.2L12.5 11.8 M3.2 16L12.5 11.8 M21.5 16L12.5 11.8" fill="none" stroke="#0a0a0a" stroke-width="1.250" stroke-linecap="round"/></svg></div>
<div class="vb" style="left:284px;top:4px"><svg style="position:absolute;left:0px;top:0px" width="24" height="24" viewBox="0 0 24 24"><path d="M12.500 2.500L22 6.500v10L12.500 22 3 16.500V6.500z" fill="#2fb81e"/><path d="M12.500 2.500L22 6.500 12.500 10.800 3 6.500z" fill="#7cf050"/><path d="M12.500 10.800L22 6.500v10L12.500 22z" fill="#1e9412"/></svg></div>
<div class="vb" style="left:4px;top:32px"><svg style="position:absolute;left:0px;top:0px" width="24" height="24" viewBox="0 0 24 24"><use href="#cylW" x="2" y="2" width="20" height="20"/></svg></div>
<div class="vb" style="left:4px;top:60px"><svg style="position:absolute;left:0px;top:0px" width="24" height="24" viewBox="0 0 24 24"><use href="#cylW2" x="2" y="2" width="20" height="20"/></svg></div>
<div class="vb on" style="left:4px;top:88px"><svg style="position:absolute;left:-1px;top:-1px" width="24" height="24" viewBox="0 0 24 24"><use href="#cylB" x="2" y="2" width="20" height="20"/></svg></div>
<div class="vb" style="left:4px;top:116px"><svg style="position:absolute;left:0px;top:0px" width="24" height="24" viewBox="0 0 24 24"><use href="#cylG" x="2" y="2" width="20" height="20"/></svg></div>
<div class="vb" style="left:4px;top:144px"><svg style="position:absolute;left:0px;top:0px" width="24" height="24" viewBox="0 0 24 24"><use href="#cylM" x="2" y="2" width="20" height="20"/></svg></div>
</div>
<div id="status1" class="abs"></div><div id="status2" class="abs"></div><div id="taskbar" class="abs"></div>
<div class="abs" style="left:48px;top:1040px;width:344px;height:8px;background:#f2f2f2"></div>
<div class="abs" style="left:736px;top:1040px;width:48px;height:8px;background:#4a4a4a"></div>
<div class="abs" style="left:1817px;top:1044px;width:40px;height:12px;line-height:12px;font-size:11.500px;color:#fff;overflow:hidden;white-space:nowrap">15:04</div>
<div class="abs" style="left:1341px;top:1003px;width:131px;height:16px;background:#fff"></div>
<div class="grip" style="left:1334px;top:1003px;height:15px;box-shadow:none;width:4px;background-image:repeating-linear-gradient(to bottom,#b9bfcc 0,#b9bfcc 1px,rgba(0,0,0,0) 1px,rgba(0,0,0,0) 3px)"></div>
<svg class="ic" style="left:1458px;top:1003px" width="14" height="14" viewBox="0 0 14 14"><path d="M2 12l4-4" stroke="#2a6ac8" stroke-width="1.600"/><circle cx="8.500" cy="5.500" r="3.600" fill="#f4f8ff" stroke="#2a6ac8" stroke-width="1.300"/></svg>
<div class="abs" style="left:1476px;top:1003px;width:4px;height:15px;background-image:repeating-linear-gradient(to bottom,#b9bfcc 0,#b9bfcc 1px,rgba(0,0,0,0) 1px,rgba(0,0,0,0) 3px)"></div>
<div class="abs" style="left:1658px;top:1003px;width:4px;height:15px;background-image:repeating-linear-gradient(to bottom,#b9bfcc 0,#b9bfcc 1px,rgba(0,0,0,0) 1px,rgba(0,0,0,0) 3px)"></div>
<div class="st" style="left:1485px;top:1004px;letter-spacing:.1px">绝对 XY 上视图</div>
<div class="sep" style="left:1592px;top:1003px"></div>
<div class="st" style="left:1601px;top:1004px">绝对视图</div>
<div class="st" style="left:1668.500px;top:1004px;font-weight:bold;font-size:12px;letter-spacing:-.15px">LAYER0</div>
<div class="sep" style="left:1726px;top:1003px"></div>
<div class="sep" style="left:1757px;top:1003px"></div>
<div class="sep" style="left:1800px;top:1003px"></div>
<div class="sep" style="left:1843px;top:1003px"></div>
<div class="sep" style="left:1886px;top:1003px"></div>
<div class="abs" style="left:1762px;top:1005px;width:32px;height:12px;background:#4a6492"></div>
<div class="abs" style="left:1805px;top:1005px;width:32px;height:12px;background:#4a6492"></div>
<div class="abs" style="left:1848px;top:1005px;width:32px;height:12px;background:#4a6492"></div>
<svg class="ic" style="left:1893px;top:1002px" width="15" height="15" viewBox="0 0 15 15"><circle cx="7.500" cy="7.500" r="6.500" fill="#1a3ad8" stroke="#0a1a6a" stroke-width=".6"/><path d="M3 5c2-2 4-2 5-1s-1 3 0 4 3 0 4 2-3 3-5 2-2-3-3-4-1-2-1-3z" fill="#28c028"/><path d="M10 3c2 0 3 2 3 3l-2-.5z" fill="#28c028"/></svg>
<div class="sep" style="left:1132px;top:1023px"></div>
<div class="sep" style="left:1175px;top:1023px"></div>
<div class="sep" style="left:1206px;top:1023px"></div>
<div class="sep" style="left:1237px;top:1023px"></div>
<div class="sep" style="left:1268px;top:1023px"></div>
<div class="sep" style="left:1299px;top:1023px"></div>
<div class="sep" style="left:1330px;top:1023px"></div>
<div class="sep" style="left:1361px;top:1023px"></div>
<div class="sep" style="left:1455px;top:1023px"></div>
<div class="sep" style="left:1580px;top:1023px"></div>
<div class="sep" style="left:1654px;top:1023px"></div>
<div class="st" style="left:1141px;top:1024px">拴牢</div>
<svg class="ic" style="left:1182px;top:1022px" width="17" height="17" viewBox="0 0 17 17"><rect x=".5" y=".5" width="16" height="16" fill="#c8ccd8" stroke="#5a607a" stroke-width="1"/><use href="#refB" x="2" y="2" width="13" height="13"/><path d="M3.500 8C3.500 5 6 3 8.500 3.300c1.300.2 2.200.8 2.800 1.500l1.500-1.500v4.500H8.300l1.700-1.700C9.500 5.600 9 5.400 8.300 5.400 6.800 5.400 5.700 6.600 5.700 8z" fill="#e2707a"/><path d="M13.500 9c0 3-2.500 5-5 4.700-1.300-.2-2.200-.8-2.800-1.500L4.200 13.700V9.200h4.500L7 10.900c.5.500 1 .7 1.700.7 1.500 0 2.600-1.200 2.600-2.600z" fill="#e2707a"/></svg>
<div class="abs" style="left:1212px;top:1021px;width:18px;height:18px;background:#fbdb68"></div>
<svg class="ic" style="left:1212px;top:1021px" width="18" height="18" viewBox="0 0 18 18"><path d="M4 2l2 4M9 1v4M13 2l-2 4M2 6l4 2M2 11l4-1" stroke="#c838c8" stroke-width="1.200"/><path d="M7 6l9 8-4 .5 2 3-2 .8-2-3.200-3 2.500z" fill="#c8ccd8" stroke="#6a6a7a" stroke-width=".7"/></svg>
<svg class="ic" style="left:1244px;top:1022px" width="18" height="17" viewBox="0 0 18 17"><path d="M5 8l6-6 6 3-6 5z" fill="#e8b070" stroke="#8a5a20" stroke-width=".6"/><path d="M3 9l6-4 7 3v8H3z" fill="#eef2fa" stroke="#3a5a9c" stroke-width=".7"/><text x="9.500" y="15" font-size="7" font-weight="bold" font-family="Liberation Sans,sans-serif" text-anchor="middle" fill="#1a4ac8">10</text><path d="M7 8v2M6 9h2" stroke="#1a4ac8" stroke-width=".8"/></svg>
<svg class="ic" style="left:1275px;top:1021px" width="18" height="19" viewBox="0 0 18 19"><ellipse cx="9" cy="17.500" rx="6" ry="1.300" fill="#667" opacity=".5"/><text x="9" y="15" font-family="Liberation Sans,sans-serif" font-weight="bold" font-size="18" text-anchor="middle" fill="#3f78d0" stroke="#1f4a94" stroke-width=".4">?</text></svg>
<svg class="ic" style="left:1304px;top:1022px" width="20" height="17" viewBox="0 0 20 17"><path d="M5 3l4-2 4 2v5l-4 2-4-2z" fill="#4a8af0" stroke="#1a3a8a" stroke-width=".6"/><path d="M5 3l4 2 4-2M9 5v5" fill="none" stroke="#1a3a8a" stroke-width=".5"/><path d="M10 9l4-2 4 2v5l-4 2-4-2z" fill="#6a9a9a" stroke="#1a2a2a" stroke-width=".7"/><path d="M10 9l4 2 4-2M14 11v5" fill="none" stroke="#1a2a2a" stroke-width=".5"/><path d="M1 11h6M4 8l4 3-4 3" fill="none" stroke="#e81818" stroke-width="1.500"/></svg>
<div class="abs" style="left:1336px;top:1021px;width:18px;height:18px;background:#fbdb68"></div>
<svg class="ic" style="left:1336px;top:1021px" width="18" height="18" viewBox="0 0 18 18"><path d="M2 6l7-3 7 3v8l-7 3-7-3z" fill="#7ab8b8" stroke="#1a4a8a" stroke-width=".8"/><path d="M2 6l7-3 7 3-7 3z" fill="#d838f0"/><path d="M9 9v8l7-3V6z" fill="#8aa8c8"/><path d="M2 6l7 3 7-3M9 9v8" fill="none" stroke="#1a4a8a" stroke-width=".7"/></svg>
<svg class="ic" style="left:1430px;top:1022px" width="20" height="17" viewBox="0 0 20 17"><rect x="1" y="2" width="16" height="14" fill="#dfe4f0" stroke="#4a5478" stroke-width="1.400"/><path d="M9 2v14M1 9h16" stroke="#4a5478" stroke-width="1.400"/></svg>
<div class="st" style="left:1463px;top:1024px;letter-spacing:-.08px">LS: 1.00 PS: 1.00</div>
<div class="st" style="left:1589px;top:1024px">单位: 毫米</div>
<div class="st" style="left:1662.500px;top:1024px;letter-spacing:.49px"><span style="color:#e8141e">X =-2053.819</span> Y = 1113.590 Z = 0000.000</div>
<svg class="ic" style="left:1355px;top:960px" width="110" height="84" viewBox="1355 960 110 84">
<ellipse cx="1406.300" cy="1037.800" rx="14.500" ry="2.600" fill="#b47a50"/>
<circle cx="1367.500" cy="1005.400" r="8.200" fill="#9a6a56"/><text x="1367.500" y="1010.300" font-family="Liberation Sans,sans-serif" font-size="13.500" text-anchor="middle" fill="#fff">A</text>
<circle cx="1374.400" cy="1026.400" r="8.200" fill="#9a6a56"/><path d="M1369,1023.300 l3.200,-2 q2.200,1.600 4.400,0 l3.200,2 -1.600,2.400 -1.400,-.8 v6 h-4.800 v-6 l-1.400,.8z" fill="#fff"/>
<path d="M1404.500,973.500 q-1.500,-5 -4.500,-6.500" fill="none" stroke="#8a4a1c" stroke-width="1.500" stroke-linecap="round"/><ellipse cx="1400.500" cy="967" rx="2.600" ry="2" fill="#8a4a1c" transform="rotate(30 1400.500 967)"/>
<path d="M1409.500,973.500 q.5,-3 0,-5" fill="none" stroke="#8a4a1c" stroke-width="1.500" stroke-linecap="round"/><ellipse cx="1409.300" cy="968.300" rx="1.500" ry="2.200" fill="#8a4a1c"/>
<circle cx="1389.500" cy="977.600" r="5.800" fill="#c68a48" stroke="#a86a30" stroke-width=".6"/><ellipse cx="1389.800" cy="978.300" rx="2.800" ry="2.400" fill="#f0b8a0"/>
<circle cx="1423" cy="977.600" r="5.800" fill="#c68a48" stroke="#a86a30" stroke-width=".6"/><ellipse cx="1422.700" cy="978.300" rx="2.800" ry="2.400" fill="#f0b8a0"/>
<!-- body -->
<path d="M1391,1019 q-5,1.500 -4.500,5 q2,2 5,-1z" fill="#fdf158" stroke="#e0c030" stroke-width=".5"/>
<path d="M1421,1018.500 q5,1 5.500,5.500 q-2.500,2 -5.500,-1.500z" fill="#fdf158" stroke="#e0c030" stroke-width=".5"/>
<path d="M1401,1016 h19 q3,10 0,17 q-1,4 -4,3.500 q-2,-.5 -2,-2.500 h-3 q0,3 -3,3 h-6 q-4,0 -3,-3.500z" fill="#fdf158"/>
<ellipse cx="1398.500" cy="1036.500" rx="3.600" ry="1.800" fill="#fdf158"/>
<ellipse cx="1406.300" cy="995.500" rx="26.500" ry="23" fill="#c68a48" stroke="#a86a30" stroke-width="1"/>
<path d="M1392,1015 q14,8 29,0 q-2,5.500 -14,5.500 q-12,0 -15,-5.500z" fill="#c68a48" stroke="#a86a30" stroke-width=".5"/>
<ellipse cx="1406.300" cy="1000.500" rx="20.600" ry="17.200" fill="#fdf158" stroke="#b07a30" stroke-width=".7"/>
<circle cx="1395.600" cy="993.800" r="1.500" fill="#5a2e10"/><circle cx="1416.800" cy="993.400" r="1.500" fill="#5a2e10"/><ellipse cx="1406.400" cy="997.700" rx="1.300" ry=".8" fill="#8a4a1c"/>
<ellipse cx="1390.700" cy="999.700" rx="3.600" ry="2.700" fill="#fba63a" opacity=".85"/><ellipse cx="1421.200" cy="999.700" rx="3.600" ry="2.700" fill="#fba63a" opacity=".85"/>
<path d="M1398,1031 L1417,1019.500" stroke="#b07a40" stroke-width="1.600"/>
<circle cx="1391" cy="1022.800" r="2" fill="#c68a48"/><circle cx="1400.600" cy="1022.800" r="2" fill="#c68a48"/>
<ellipse cx="1395.800" cy="1028.400" rx="6.400" ry="6" fill="#c68a48" stroke="#a86a30" stroke-width=".5"/>
<circle cx="1393.400" cy="1027" r=".7" fill="#4a2a10"/><circle cx="1398.200" cy="1027" r=".7" fill="#4a2a10"/>
<ellipse cx="1392.800" cy="1029" rx="1.300" ry=".9" fill="#ff70d0"/><ellipse cx="1399.400" cy="1029.600" rx="1.300" ry=".9" fill="#ff70d0"/>
<g font-family="Liberation Sans,sans-serif" font-weight="bold" stroke-linejoin="round" style="paint-order:stroke">
<text transform="translate(1444.600 990.300) rotate(7) scale(.78 .98)" x="0" y="0" font-size="27" text-anchor="middle" fill="#fffaf0" stroke="#c68a48" stroke-width="3.600">W</text>
<text transform="translate(1444.600 990.300) rotate(7) scale(.78 .98)" x="0" y="0" font-size="27" text-anchor="middle" fill="#fffaf0" stroke="#fffaf0" stroke-width="2.200">W</text>
</g>
<g fill="#d49858"><circle cx="1439.500" cy="982" r="1.500"/><circle cx="1447" cy="979" r="1.300"/><circle cx="1452.500" cy="984.500" r="1.400"/><circle cx="1443" cy="975" r="1.100"/><circle cx="1450" cy="988" r="1.200"/></g>
<circle cx="1439" cy="992.300" r="3.500" fill="#d09a68" stroke="#a86a30" stroke-width=".5"/><circle cx="1454" cy="993" r="3.500" fill="#d09a68" stroke="#a86a30" stroke-width=".5"/>
<circle cx="1454.300" cy="993.600" r="1.600" fill="#f0b8a0"/>
<g font-family="Liberation Sans,sans-serif" font-weight="bold" stroke-linejoin="round" style="paint-order:stroke">
<text transform="translate(1445.700 1009.300) scale(.92 1)" x="0" y="0" font-size="22" text-anchor="middle" fill="#d09a68" stroke="#a86a30" stroke-width="3.400">O</text>
<text transform="translate(1445.700 1009.300) scale(.92 1)" x="0" y="0" font-size="22" text-anchor="middle" fill="#d09a68" stroke="#d09a68" stroke-width="2.400">O</text>
<text transform="translate(1448 1032.600) rotate(-7) scale(.76 .95)" x="0" y="0" font-size="28" text-anchor="middle" fill="#fdf158" stroke="#d4b028" stroke-width="3.800">W</text>
<text transform="translate(1448 1032.600) rotate(-7) scale(.76 .95)" x="0" y="0" font-size="28" text-anchor="middle" fill="#fdf158" stroke="#fdf158" stroke-width="2.400">W</text>
</g>
</svg>
</body>
</html>
